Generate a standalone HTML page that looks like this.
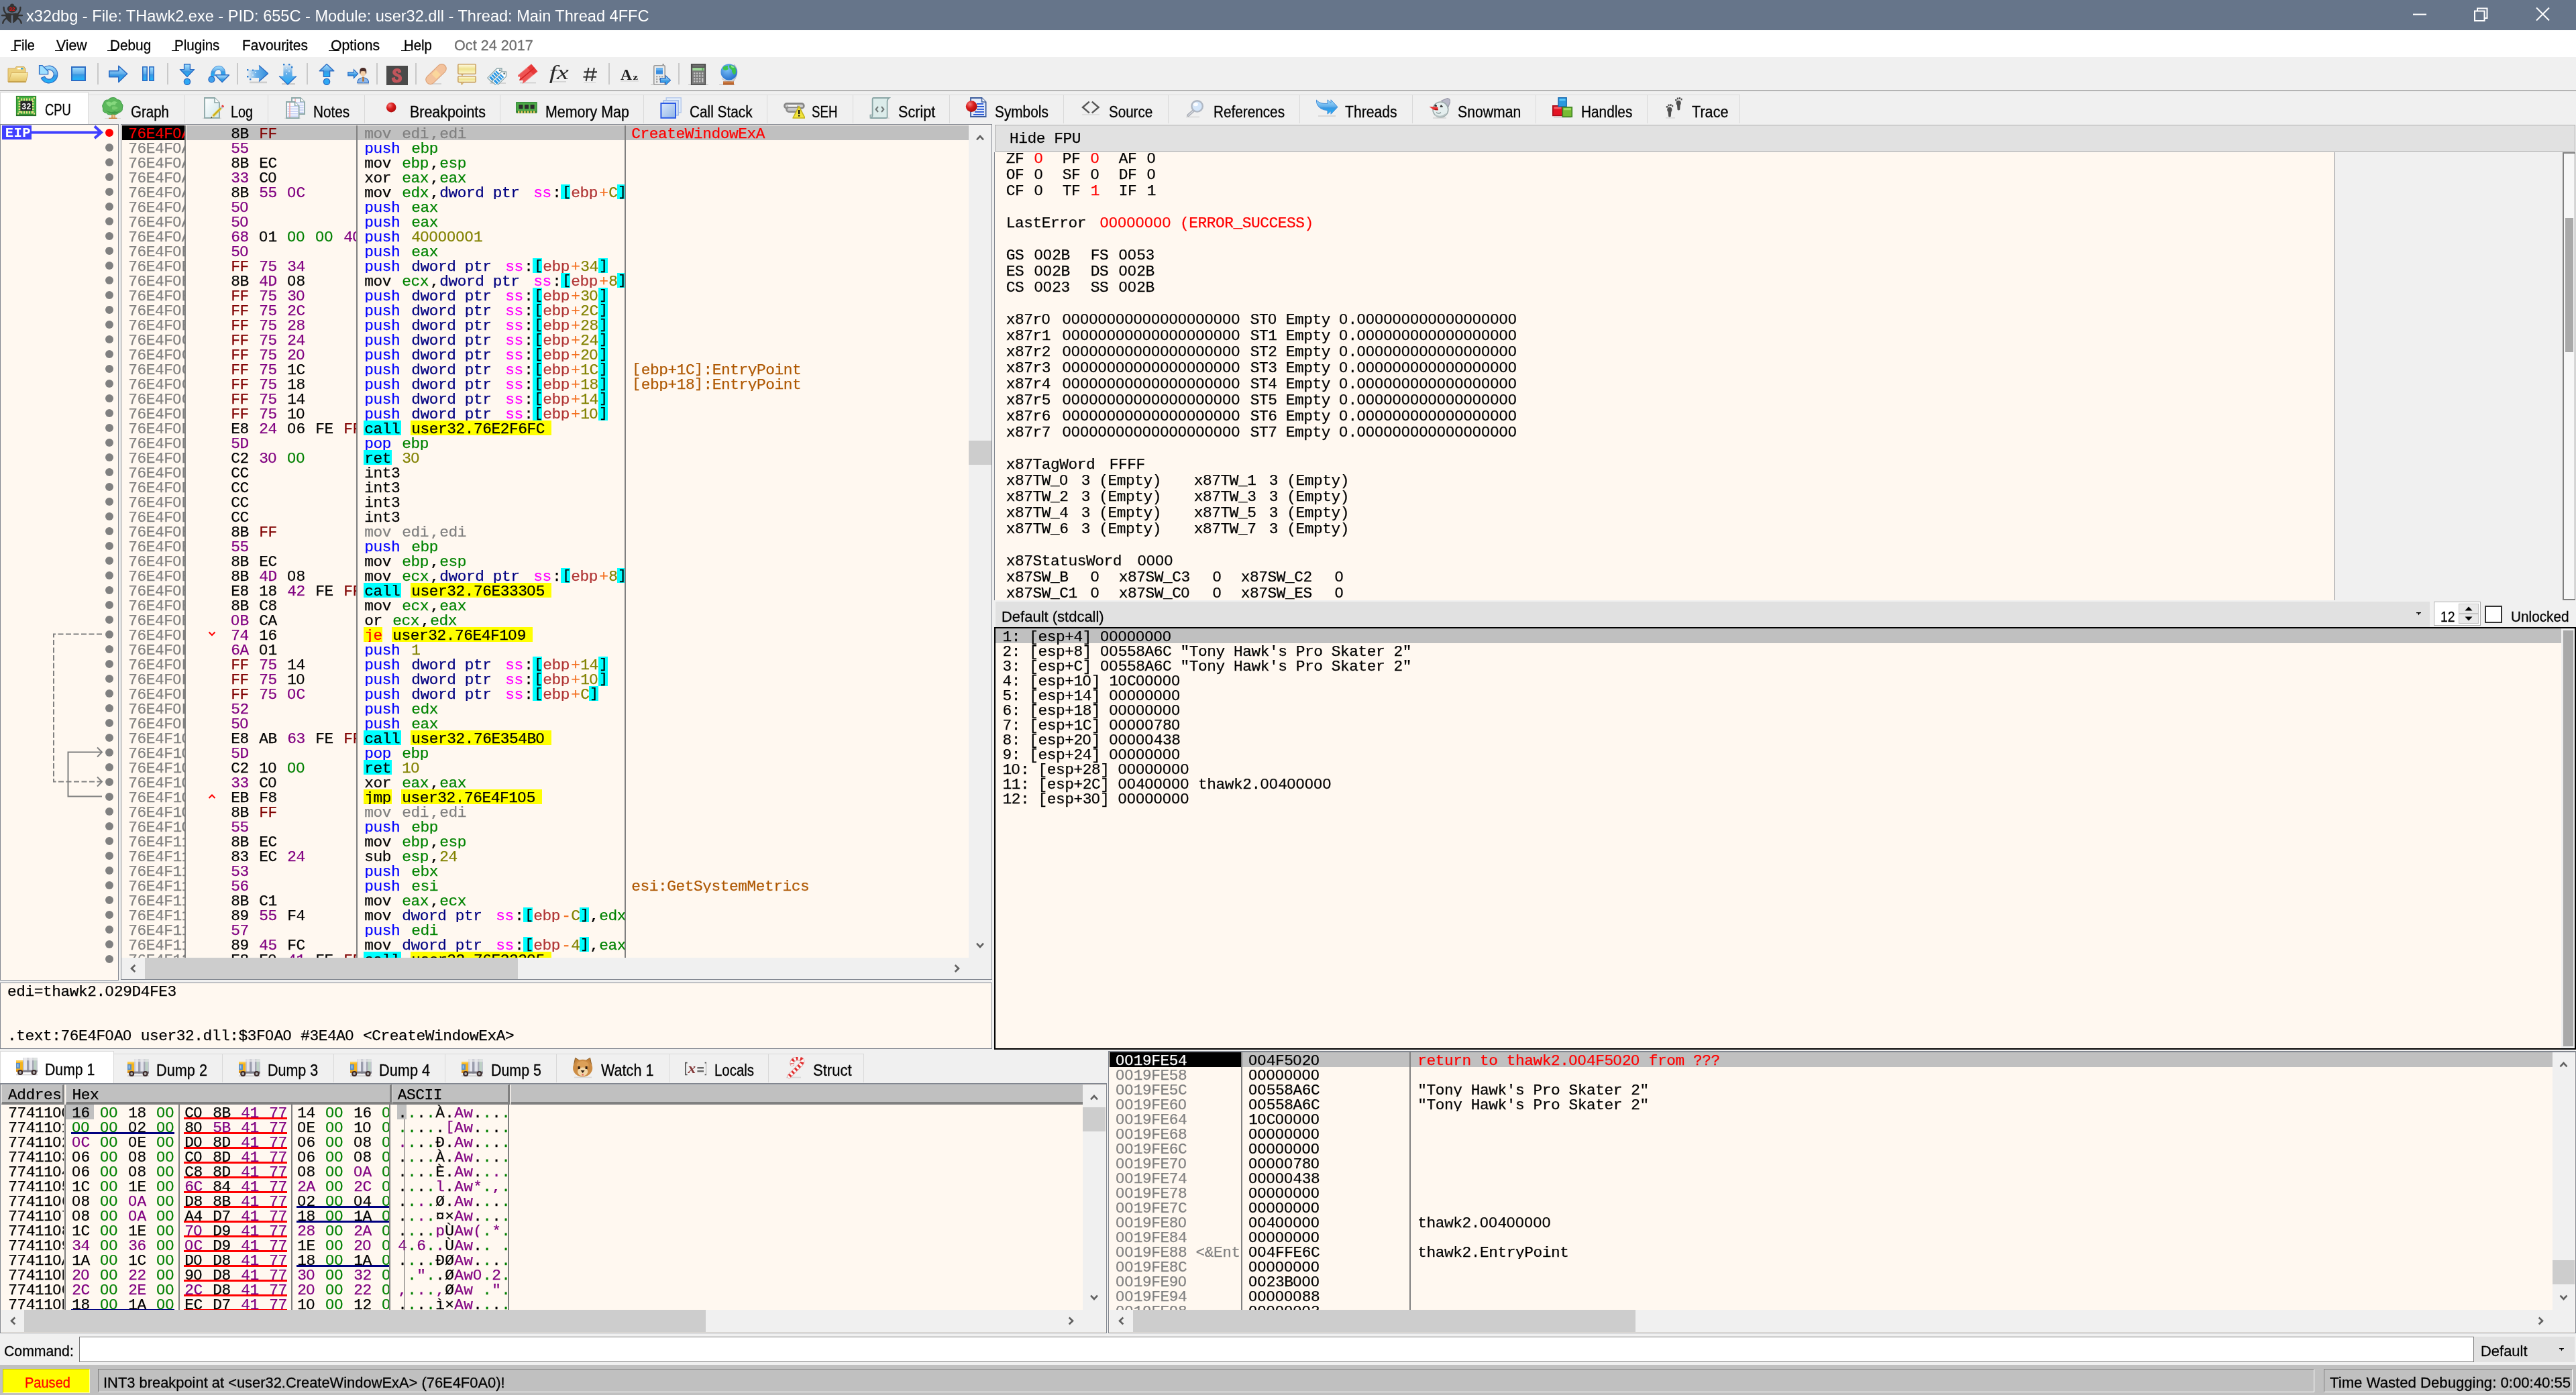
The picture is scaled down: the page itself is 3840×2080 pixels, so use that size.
<!DOCTYPE html><html><head><meta charset="utf-8"><title>x32dbg</title><style>
html,body{margin:0;padding:0}
body{width:3840px;height:2080px;position:relative;overflow:hidden;background:#f0f0f0;font-family:"Liberation Sans",sans-serif;}
div,span,i,svg{position:absolute;box-sizing:border-box}
.s{white-space:pre;transform-origin:0 50%;font-family:"Liberation Sans",sans-serif;-webkit-text-stroke:0.3px}
.m{white-space:pre;font-family:"Liberation Mono",monospace;font-size:22.8px;line-height:26.5px;letter-spacing:-0.430px;-webkit-text-stroke:0.25px}
.pane{background:#fff8f0;overflow:hidden}
/* monospace grid rows */
.r{left:0;height:22px;width:100%;white-space:pre;font-family:"Liberation Mono",monospace;font-size:22.8px;line-height:26.5px;letter-spacing:-0.430px;overflow:hidden;-webkit-text-stroke:0.25px}
.c{top:0;height:22px;overflow:hidden}
.r i{position:static;display:inline-block;font-style:normal;height:22px;vertical-align:top;text-indent:1.3px;overflow:visible}
.z{font-family:"Liberation Sans",sans-serif;font-weight:400;line-height:0;letter-spacing:0.570px}.bi{font-size:20.9px;position:relative;top:-1.95px;letter-spacing:0.71px;font-weight:400}.bo{margin-left:1.3px}.w1{width:14px}.w2{width:28px}.w3{width:42px}.w4{width:56px}.w5{width:70px}.w6{width:84px}.w7{width:98px}.w8{width:112px}.w9{width:126px}.w10{width:140px}.w11{width:154px}.w12{width:168px}.w13{width:182px}.w14{width:196px}.w15{width:210px}.w16{width:224px}.w17{width:238px}.w18{width:252px}.w19{width:266px}.w20{width:280px}
.g{color:#808080}.bl{color:#0000ff}.rg{color:#008300}.nv{color:#000080}.mg{color:#ff00ff}.br{color:#b03434}.or{color:#f36f20}.ol{color:#828200}
.cy{background:#00ffff}.ye{background:#ffff00}.rd{color:#ff0000}.pu{color:#800080}.gr{color:#008000}.dr{color:#800000}
.sel{background:#c0c0c0}
</style></head><body><div id="root" style="left:0;top:0;width:3840px;height:2080px;overflow:hidden;will-change:transform"><svg width="0" height="0" style="left:0;top:0"><defs><linearGradient id="gB" x1="0" y1="0" x2="0" y2="1"><stop offset="0" stop-color="#a6e2ff"/><stop offset=".48" stop-color="#62aeea"/><stop offset=".56" stop-color="#3a98e2"/><stop offset="1" stop-color="#1eb6fd"/></linearGradient><linearGradient id="gBh" x1="0" y1="0" x2="1" y2="0"><stop offset="0" stop-color="#9fdcff"/><stop offset="1" stop-color="#2f8ddc"/></linearGradient><linearGradient id="gF" x1="0" y1="0" x2="0" y2="1"><stop offset="0" stop-color="#f9e9a4"/><stop offset="1" stop-color="#e4c265"/></linearGradient><linearGradient id="gY" x1="0" y1="0" x2="0" y2="1"><stop offset="0" stop-color="#fffbe6"/><stop offset=".5" stop-color="#efe28e"/><stop offset="1" stop-color="#fdf7d0"/></linearGradient><linearGradient id="gFadeR" x1="0" y1="0" x2="1" y2="0"><stop offset="0" stop-color="#5aa8e8" stop-opacity="0"/><stop offset=".45" stop-color="#5aa8e8" stop-opacity=".9"/><stop offset="1" stop-color="#2f8ddc"/></linearGradient><linearGradient id="gFadeD" x1="0" y1="0" x2="0" y2="1"><stop offset="0" stop-color="#5aa8e8" stop-opacity="0"/><stop offset=".45" stop-color="#5aa8e8" stop-opacity=".9"/><stop offset="1" stop-color="#18a8f8"/></linearGradient><radialGradient id="gRed" cx=".35" cy=".3" r=".8"><stop offset="0" stop-color="#f27878"/><stop offset=".45" stop-color="#da1c1c"/><stop offset="1" stop-color="#a40a0a"/></radialGradient><radialGradient id="gGlobe" cx=".4" cy=".35" r=".75"><stop offset="0" stop-color="#7cc0f8"/><stop offset="1" stop-color="#1c68c8"/></radialGradient><linearGradient id="gPage" x1="0" y1="0" x2="1" y2="1"><stop offset="0" stop-color="#ffffff"/><stop offset="1" stop-color="#cfe6ea"/></linearGradient><linearGradient id="gSq" x1="0" y1="0" x2="1" y2="1"><stop offset="0" stop-color="#dbe9fb"/><stop offset="1" stop-color="#8fb4e6"/></linearGradient></defs></svg><div style="left:0px;top:0px;width:3840px;height:45px;background:#66758a;"></div><svg style="left:0;top:0" width="40" height="45" viewBox="0 0 40 45"><g fill="#333" stroke="none"><path d="M8.6 20.3Q18 17.6 27.4 20.3L27.6 25Q26 31 19.3 34.4V22.4H16.7V34.4Q10 31 8.4 25Z"/><ellipse cx="18" cy="13.2" rx="9" ry="7" fill="#66758a"/><ellipse cx="18" cy="13.2" rx="7.2" ry="5.5"/><circle cx="18" cy="8.4" r="3"/></g><g fill="none" stroke="#333" stroke-width="2.4" stroke-linecap="round"><path d="M9.4 20.6Q5.4 17 5.6 10.9M26.6 20.6Q30.6 17 30.4 10.9M3 23H10M26 23H33M10.5 27Q5.2 29 4.2 34.6M25.5 27Q30.8 29 31.8 34.6"/></g><text x="18" y="16.3" font-family="Liberation Sans" font-weight="700" font-size="8" text-anchor="middle" fill="#ff1010">32</text></svg><span class="s" style="left:39.0px;top:7.8px;font-size:24.5px;line-height:32px;color:#fff;transform:scaleX(0.9617);-webkit-text-stroke:0">x32dbg - File: THawk2.exe - PID: 655C - Module: user32.dll - Thread: Main Thread 4FFC</span><svg style="left:3590px;top:0" width="250" height="45" viewBox="0 0 250 45" fill="none" stroke="#fff" stroke-width="2"><path d="M7 21.5H27"/><path d="M99 16.5H113.5V31H99Z"/><path d="M103 16V12.5H117.5V27H114"/><path d="M191 11.5L210 30.5M210 11.5L191 30.5"/></svg><div style="left:0px;top:45px;width:3840px;height:40px;background:#fff;"></div><span class="s" style="left:19.6px;top:53.1px;font-size:22.5px;line-height:29px;color:#000;transform:scaleX(0.8769);">File</span><div style="left:16.3px;top:74.7px;width:9.8px;height:1px;background:#000;"></div><span class="s" style="left:84.0px;top:53.1px;font-size:22.5px;line-height:29px;color:#000;transform:scaleX(0.9426);">View</span><div style="left:82px;top:74.7px;width:11.799999999999997px;height:1px;background:#000;"></div><span class="s" style="left:163.5px;top:53.1px;font-size:22.5px;line-height:29px;color:#000;transform:scaleX(0.9229);">Debug</span><div style="left:160px;top:74.7px;width:13.599999999999994px;height:1px;background:#000;"></div><span class="s" style="left:259.6px;top:53.1px;font-size:22.5px;line-height:29px;color:#000;transform:scaleX(0.9133);">Plugins</span><div style="left:256px;top:74.7px;width:11.399999999999977px;height:1px;background:#000;"></div><span class="s" style="left:361.4px;top:53.1px;font-size:22.5px;line-height:29px;color:#000;transform:scaleX(0.9320);">Favourites</span><div style="left:424.8px;top:74.7px;width:4.199999999999989px;height:1px;background:#000;"></div><span class="s" style="left:493.2px;top:53.1px;font-size:22.5px;line-height:29px;color:#000;transform:scaleX(0.9439);">Options</span><div style="left:490px;top:74.7px;width:15.800000000000011px;height:1px;background:#000;"></div><span class="s" style="left:601.8px;top:53.1px;font-size:22.5px;line-height:29px;color:#000;transform:scaleX(0.9053);">Help</span><div style="left:598px;top:74.7px;width:14.399999999999977px;height:1px;background:#000;"></div><span class="s" style="left:676.9px;top:53.1px;font-size:22.5px;line-height:29px;color:#6e6e6e;transform:scaleX(0.9609);">Oct 24 2017</span><div style="left:0px;top:85px;width:3840px;height:49px;background:#f0f0f0;"></div><div style="left:0px;top:134px;width:3840px;height:2px;background:#b4b4b4;"></div><div style="left:145px;top:94px;width:2px;height:32px;background:#c9c9c9;"></div><div style="left:249px;top:94px;width:2px;height:32px;background:#c9c9c9;"></div><div style="left:353px;top:94px;width:2px;height:32px;background:#c9c9c9;"></div><div style="left:457px;top:94px;width:2px;height:32px;background:#c9c9c9;"></div><div style="left:561px;top:94px;width:2px;height:32px;background:#c9c9c9;"></div><div style="left:619px;top:94px;width:2px;height:32px;background:#c9c9c9;"></div><div style="left:907px;top:94px;width:2px;height:32px;background:#c9c9c9;"></div><div style="left:1011px;top:94px;width:2px;height:32px;background:#c9c9c9;"></div><svg style="left:10px;top:95px" width="32" height="32" viewBox="0 0 32 32"><path d="M2 7H13L14 4.5H26L27 7H28V27H2Z" fill="#ecd07c" stroke="#d2ab5c"/><rect x="16" y="6" width="5" height="2.4" fill="#fff"/><rect x="21" y="6" width="3.4" height="2.4" fill="#38a8e0"/><path d="M7 13.5H32L28.5 27.5H2.5Z" fill="url(#gF)" stroke="#d4ae5e"/><path d="M2.5 27H28.5" stroke="#c09a44" stroke-width="1.6"/></svg><svg style="left:56px;top:95px" width="32" height="32" viewBox="0 0 32 32"><path d="M6.5 8.66A12.8 12.8 0 1 1 5.4 21.4L10.47 19.04A7.2 7.2 0 1 0 11.1 11.87Z" fill="url(#gB)" stroke="#2b6cc4" stroke-width="1.2"/><path d="M2.6 2.6H7L15.6 11.2V15.6H2.6Z" fill="#9fe0ff" stroke="#2b6cc4" stroke-width="1.4"/></svg><svg style="left:102px;top:95px" width="32" height="32" viewBox="0 0 32 32"><rect x="5" y="5" width="20" height="20" fill="url(#gB)" stroke="#2b6cc4" stroke-width="2"/></svg><svg style="left:160px;top:95px" width="32" height="32" viewBox="0 0 32 32"><path d="M2.8 10.8H16.8V3.4L29.6 15L16.8 27.4V19.6H2.8Z" fill="url(#gB)" stroke="#2b6cc4" stroke-width="1.6" stroke-linejoin="round"/></svg><svg style="left:206px;top:95px" width="32" height="32" viewBox="0 0 32 32"><rect x="6.8" y="4.8" width="6.4" height="20.4" fill="url(#gB)" stroke="#2b6cc4" stroke-width="1.6"/><rect x="16.8" y="4.8" width="6.4" height="20.4" fill="url(#gB)" stroke="#2b6cc4" stroke-width="1.6"/></svg><svg style="left:264px;top:95px" width="32" height="32" viewBox="0 0 32 32"><path d="M10.6 0.8H19.4V8.6H25.6L15 19.6L4.4 8.6H10.6Z" fill="url(#gB)" stroke="#2b6cc4" stroke-width="1.4" stroke-linejoin="round"/><circle cx="15" cy="26.8" r="4.6" fill="#2fa8f4" stroke="#2b6cc4" stroke-width="1.4"/></svg><svg style="left:310px;top:95px" width="32" height="32" viewBox="0 0 32 32"><path d="M4.6 18.5C4 9 10 3.2 16.5 3.4C23 3.6 26 9 25.8 16.5H19.8C20 11.5 18.6 8.6 15.8 8.6C12 8.6 9.4 12 9.6 18.5Z" fill="url(#gB)" stroke="#3f8bd8" stroke-width="1"/><path d="M10.8 16.8H31.6L21.2 27.6Z" fill="url(#gB)" stroke="#2b6cc4" stroke-width="1.4" stroke-linejoin="round"/><circle cx="5.4" cy="23.4" r="4.4" fill="#3fa0ec" stroke="#2b6cc4" stroke-width="1.4"/></svg><svg style="left:368px;top:95px" width="32" height="32" viewBox="0 0 32 32"><rect x="4" y="26.6" width="26" height="2.6" fill="#bdbdbd" opacity=".7"/><path d="M0 9H18V2.4L31.6 14.6L18 26.6V21H0Z" fill="url(#gFadeR)"/><path d="M18 2.4L31.6 14.6L18 26.6" fill="none" stroke="#2b6cc4" stroke-width="1.4"/><g fill="#2b7bd0"><rect x="0" y="8" width="2.4" height="2.4"/><rect x="0" y="18" width="2.4" height="2.4"/><rect x="4" y="22" width="2.4" height="2.4"/><rect x="4" y="12" width="2" height="2" fill="#bfe4ff"/><rect x="8" y="16" width="2" height="2" fill="#bfe4ff"/><rect x="12" y="12" width="2" height="2" fill="#bfe4ff"/><rect x="8" y="8.6" width="2" height="2"/></g></svg><svg style="left:414px;top:95px" width="32" height="32" viewBox="0 0 32 32"><rect x="6" y="29" width="20" height="2.4" fill="#bdbdbd" opacity=".7"/><path d="M8.4 0H21.6V18.4H27.8L15 31L2.2 18.4H8.4Z" fill="url(#gFadeD)"/><path d="M2.2 18.4L15 31L27.8 18.4" fill="none" stroke="#2b6cc4" stroke-width="1.4"/><g fill="#2b7bd0"><rect x="8" y="0" width="2.4" height="2.4"/><rect x="16" y="0" width="2.4" height="2.4"/><rect x="20" y="4" width="2.4" height="2.4"/><rect x="12" y="6" width="2" height="2" fill="#bfe4ff"/><rect x="16" y="10" width="2" height="2" fill="#bfe4ff"/><rect x="12" y="14" width="2" height="2" fill="#bfe4ff"/></g></svg><svg style="left:472px;top:95px" width="32" height="32" viewBox="0 0 32 32"><path d="M15 0.6L25.8 10.8H19.6V19.4H10.4V10.8H4.2Z" fill="url(#gB)" stroke="#2b6cc4" stroke-width="1.4" stroke-linejoin="round"/><circle cx="15" cy="26.8" r="4.6" fill="#2fa8f4" stroke="#2b6cc4" stroke-width="1.4"/></svg><svg style="left:518px;top:95px" width="32" height="32" viewBox="0 0 32 32"><path d="M0.8 12.6H9.4V8.8L15.6 15L9.4 21.4V17.8H0.8Z" fill="url(#gB)" stroke="#2b6cc4" stroke-width="1.2"/><rect x="15" y="29" width="17" height="2" fill="#bdbdbd" opacity=".7"/><path d="M14.6 28.6Q15 21.5 23.2 20.6Q31.4 21.5 31.8 28.6Z" fill="#8db8ec" stroke="#3f78c4" stroke-width="1.2"/><path d="M21.2 20.6L23.2 28.6L25.2 20.6Z" fill="#fff"/><rect x="22.2" y="19.6" width="2.2" height="7" fill="#a8601c"/><circle cx="23.2" cy="13.6" r="4.8" fill="#f4cfa8"/><path d="M18.2 14.5V10.8Q18.4 6 23.2 6Q28 6 28.2 10.8V14.5H26.8V11.4Q23 10.4 19.6 11.4V14.5Z" fill="#4a2c28"/></svg><svg style="left:576px;top:95px" width="32" height="32" viewBox="0 0 32 32"><rect x="0" y="3" width="32" height="29" fill="#4a4a4a"/><path d="M21.6 11.2C21.4 7.6 18.6 6.2 15.6 6.4C11.6 6.6 9.6 9.2 9.8 12C10 15 12.6 16.2 15.8 17.4C18 18.2 18.8 19.6 18.4 21.4C18 23 16 23.6 14.2 23C12.6 22.4 12.2 21 12.4 19.6L8.4 20.4C8.2 24.4 11 26.8 15.2 26.8C19.6 26.8 22.6 24.4 22.6 20.6C22.6 17.2 20.2 15.6 17 14.4C14.6 13.4 13.4 12.6 13.8 10.8C14.2 9.4 15.8 9.2 17 9.8C18 10.4 18.2 11.4 18 12.4Z" fill="#c2565c" stroke="#c2565c" stroke-width="1.2" transform="translate(0 1.2)"/></svg><svg style="left:634px;top:95px" width="32" height="32" viewBox="0 0 32 32"><rect x="6" y="29" width="18" height="2" fill="#c8c8c8" opacity=".7"/><rect x="-4.5" y="-6.8" width="37" height="13.6" rx="6.8" transform="translate(16 15.6) rotate(-44) translate(-14 0)" fill="#f3c29c" stroke="#dca47c" stroke-width="1.2"/><rect x="-4.5" y="-5" width="9" height="10" transform="translate(16.2 15.8) rotate(-45)" fill="#fbd79c"/></svg><svg style="left:680px;top:95px" width="32" height="32" viewBox="0 0 32 32"><rect x="2.8" y="0.8" width="26.4" height="14.4" rx="1.5" fill="url(#gY)" stroke="#c9a264" stroke-width="1.6"/><path d="M7 15.4H11L9 18.4Z" fill="#c9a264"/><rect x="2.8" y="18.8" width="26.4" height="8.8" rx="1.5" fill="url(#gY)" stroke="#c9a264" stroke-width="1.6"/><path d="M7 27.8H11L8.4 31.6Z" fill="#e8cf8a" stroke="#c9a264" stroke-width="1"/></svg><svg style="left:726px;top:95px" width="32" height="32" viewBox="0 0 32 32"><rect x="4" y="28" width="24" height="2" fill="#c8c8c8" opacity=".7"/><g transform="translate(13.5 15.5) rotate(-45)"><path d="M-13 -5H7L12 0L7 5H-13Z" fill="#fff" stroke="#8aa4a8" stroke-width="1.3"/><rect x="-11" y="-3.4" width="15" height="6.8" fill="#2b98e4"/><path d="M-7 -3.4V3.4M-3 -3.4V3.4M1 -3.4V3.4" stroke="#fff" stroke-width="1.2"/><circle cx="8" cy="0" r="1.4" fill="#5a7478"/></g><g transform="translate(20 20.5) rotate(-45)"><path d="M-13 -5H7L12 0L7 5H-13Z" fill="#fff" stroke="#8aa4a8" stroke-width="1.3"/><rect x="-11" y="-3.4" width="15" height="6.8" fill="#2b98e4"/><path d="M-7 -3.4V3.4M-3 -3.4V3.4M1 -3.4V3.4" stroke="#fff" stroke-width="1.2"/><circle cx="8" cy="0" r="1.4" fill="#5a7478"/></g></svg><svg style="left:772px;top:95px" width="32" height="32" viewBox="0 0 32 32"><rect x="3" y="27.4" width="24" height="2" fill="#c8c8c8" opacity=".7"/><g transform="translate(14 15) rotate(-40)"><path d="M-15 -7H14V7H-15L-11 3.5L-15 0L-11 -3.5Z" fill="#ee5454"/><path d="M-15 0H14" stroke="#d42020" stroke-width="1.6"/><path d="M-15 -7H14M-13 7H14" stroke="#f08080" stroke-width="1"/><rect x="6" y="-7" width="8" height="14" fill="#e22828" opacity=".6"/></g></svg><svg style="left:818px;top:95px" width="32" height="32" viewBox="0 0 32 32"><rect x="2" y="26" width="24" height="1.6" fill="#c8c8c8" opacity=".7"/><text x="0.8" y="22.6" font-family="Liberation Serif" font-style="italic" font-size="29" fill="#2a2a2a" textLength="29" lengthAdjust="spacingAndGlyphs">fx</text></svg><svg style="left:864px;top:95px" width="32" height="32" viewBox="0 0 32 32"><rect x="6" y="27" width="18" height="1.4" fill="#c8c8c8" opacity=".6"/><path d="M13.4 6L9.6 26M21.8 6L18 26M6.6 12.4H26M5.4 19.8H24.8" fill="none" stroke="#333" stroke-width="2.1"/></svg><svg style="left:922px;top:95px" width="32" height="32" viewBox="0 0 32 32"><rect x="3" y="25" width="27" height="1.6" fill="#c8c8c8" opacity=".6"/><text x="3" y="24" font-family="Liberation Serif" font-weight="700" font-size="23" fill="#222" textLength="17" lengthAdjust="spacingAndGlyphs">A</text><text x="21.6" y="24" font-family="Liberation Serif" font-weight="700" font-size="13" fill="#222" textLength="7.6" lengthAdjust="spacingAndGlyphs">z</text></svg><svg style="left:968px;top:95px" width="32" height="32" viewBox="0 0 32 32"><rect x="2" y="30" width="22" height="2" fill="#c8c8c8" opacity=".7"/><rect x="19.6" y="0" width="2" height="4" fill="#888"/><rect x="6.8" y="2.8" width="16.4" height="28.4" rx="1.5" fill="#ececec" stroke="#9a9a9a" stroke-width="1.6"/><rect x="10" y="6" width="10" height="9.6" fill="#3a8ee0"/><rect x="10" y="6" width="10" height="4" fill="#6cb4f0"/><g fill="#a8a8a8"><rect x="10" y="18" width="2.4" height="2.4"/><rect x="14" y="18" width="2.4" height="2.4"/><rect x="18" y="18" width="2.4" height="2.4"/><rect x="10" y="22" width="2.4" height="2.4"/><rect x="14" y="22" width="2.4" height="2.4"/><rect x="10" y="26" width="2.4" height="2.4"/></g><path d="M16.4 21.6H24.4V17.8L31.6 24.6L24.4 31.6V27.8H16.4Z" fill="url(#gB)" stroke="#2b6cc4" stroke-width="1.2"/></svg><svg style="left:1026px;top:95px" width="32" height="32" viewBox="0 0 32 32"><rect x="0" y="30" width="30" height="2" fill="#c8c8c8" opacity=".7"/><rect x="4.6" y="0.6" width="20.8" height="30.8" fill="#7a7a7a" stroke="#4a4a4a" stroke-width="1.4"/><rect x="5.2" y="1.2" width="19.6" height="4.8" fill="#555"/><rect x="6.6" y="2.6" width="16.8" height="1.4" fill="#8a8a8a"/><rect x="6.4" y="6.2" width="17.2" height="4" fill="#9fd89a"/><rect x="20.4" y="6.2" width="2" height="4" fill="#5aa85a"/><g fill="#c6c6c6"><rect x="8" y="13.2" width="2.4" height="2.4"/><rect x="8" y="17.2" width="2.4" height="2.4"/><rect x="8" y="21.2" width="2.4" height="2.4"/><rect x="8" y="25.2" width="2.4" height="2.4"/><rect x="12" y="13.2" width="2.4" height="2.4"/><rect x="12" y="17.2" width="2.4" height="2.4"/><rect x="12" y="21.2" width="2.4" height="2.4"/><rect x="12" y="25.2" width="2.4" height="2.4"/><rect x="16" y="13.2" width="2.4" height="2.4"/><rect x="16" y="17.2" width="2.4" height="2.4"/><rect x="16" y="21.2" width="2.4" height="2.4"/><rect x="16" y="25.2" width="2.4" height="2.4"/><rect x="20" y="13.2" width="2.4" height="2.4"/><rect x="20" y="17.2" width="2.4" height="2.4"/><rect x="20" y="21.2" width="2.4" height="6.4"/></g></svg><svg style="left:1072px;top:95px" width="32" height="32" viewBox="0 0 32 32"><rect x="0" y="30" width="24" height="2" fill="#c8c8c8" opacity=".6"/><path d="M22 1.5Q31 12 21 26" fill="none" stroke="#b8bcc4" stroke-width="2.2"/><path d="M4 22Q14 30 24 22" fill="none" stroke="#c8ccd2" stroke-width="2"/><circle cx="14.6" cy="12.4" r="12.2" fill="url(#gGlobe)"/><path d="M6 5Q9 2.6 13 3Q12 6 14 8Q11 10.4 8 9.4Q5 9.4 6 5ZM15 2.4Q21 1.6 24.4 6.4Q25.8 10 24.6 14.4Q22.4 18 20.6 14.4Q18.4 12.4 19 9Q14.4 7 15 2.4Z" fill="#3cc44a"/><path d="M18 2.6Q21 3 23 5.4Q20 7 18 5Z" fill="#8ce48c"/><rect x="6" y="26.4" width="16" height="5.2" fill="#b4602c"/><rect x="6" y="27.8" width="16" height="1.4" fill="#d88848"/></svg><div style="left:0px;top:136px;width:3840px;height:49px;background:#f0f0f0;"></div><div style="left:132px;top:141px;width:2461px;height:1px;background:#d9d9d9;"></div><div style="left:0px;top:137px;width:132px;height:49px;background:#fff;border:1px solid #d9d9d9;border-bottom:none"></div><svg style="left:23px;top:142px" width="32" height="32" viewBox="0 0 32 32"><rect x="1.6" y="1.6" width="28.8" height="28.8" fill="#46b040" stroke="#2c8a30" stroke-width="1.4"/><rect x="1" y="28.6" width="30" height="2.4" fill="#256e28"/><g fill="#f2dc8a"><rect x="8.2" y="4.6" width="2" height="3.6"/><rect x="8.2" y="23.8" width="2" height="3.6"/><rect x="4.6" y="8.2" width="3.6" height="2"/><rect x="23.8" y="8.2" width="3.6" height="2"/><rect x="12.1" y="4.6" width="2" height="3.6"/><rect x="12.1" y="23.8" width="2" height="3.6"/><rect x="4.6" y="12.1" width="3.6" height="2"/><rect x="23.8" y="12.1" width="3.6" height="2"/><rect x="16.0" y="4.6" width="2" height="3.6"/><rect x="16.0" y="23.8" width="2" height="3.6"/><rect x="4.6" y="16.0" width="3.6" height="2"/><rect x="23.8" y="16.0" width="3.6" height="2"/><rect x="19.9" y="4.6" width="2" height="3.6"/><rect x="19.9" y="23.8" width="2" height="3.6"/><rect x="4.6" y="19.9" width="3.6" height="2"/><rect x="23.8" y="19.9" width="3.6" height="2"/><rect x="23.799999999999997" y="4.6" width="2" height="3.6"/><rect x="23.799999999999997" y="23.8" width="2" height="3.6"/><rect x="4.6" y="23.799999999999997" width="3.6" height="2"/><rect x="23.8" y="23.799999999999997" width="3.6" height="2"/><rect x="3" y="3" width="2.2" height="2.2"/><rect x="26.8" y="3" width="2.2" height="2.2"/><rect x="3" y="26.4" width="2.2" height="2.2"/><rect x="26.8" y="26.4" width="2.2" height="2.2"/></g><rect x="7.4" y="8.6" width="17.6" height="14.4" fill="#262626"/><text x="16.2" y="20.6" font-family="Liberation Mono" font-weight="700" font-size="13.5" text-anchor="middle" fill="#fff" textLength="14.5" lengthAdjust="spacingAndGlyphs">32</text></svg><span class="s" style="left:66.5px;top:149.2px;font-size:23px;line-height:30px;color:#000;transform:scaleX(0.7990);">CPU</span><div style="left:275px;top:141px;width:1px;height:43px;background:#d9d9d9;"></div><svg style="left:152px;top:145px" width="32" height="32" viewBox="0 0 32 32"><rect x="4" y="31" width="24" height="2" fill="#c8c8c8" opacity=".6"/><rect x="14" y="24" width="6" height="8" fill="#d8a468"/><rect x="16.4" y="24" width="2" height="8" fill="#f0c890"/><rect x="10" y="30.6" width="12.4" height="2" fill="#c07830"/><path d="M16 0.6Q21 0.2 22.6 3.8Q28 3.4 29 8.6Q32.4 12 30.4 16.2Q31 21 26 22.6Q21 27 16 25Q10 27.6 6.4 23.4Q0.4 22.6 1.6 17Q-0.8 12 2.6 8.6Q3.4 3.6 9.4 4Q11.4 0.4 16 0.6Z" fill="#5cb85c" stroke="#3c9a44" stroke-width="1"/><path d="M6 8Q10 5 14 8Q18 4 23 7.6Q20 9 19.6 12Q14 10 12 14Q8 13 6 8Z" fill="#86d87e"/><path d="M15 14Q20 12 24 16Q20 20 15 18Z" fill="#78cc70"/><path d="M5 19Q12 24 19 21Q24 23 27 19Q26 23 20 24.4Q12 26 5 19Z" fill="#3e9a46"/></svg><span class="s" style="left:195.3px;top:151.6px;font-size:23px;line-height:30px;color:#000;transform:scaleX(0.8915);">Graph</span><div style="left:399px;top:141px;width:1px;height:43px;background:#d9d9d9;"></div><svg style="left:302px;top:145px" width="32" height="32" viewBox="0 0 32 32"><rect x="0" y="30.6" width="28" height="1.6" fill="#c8c8c8" opacity=".6"/><path d="M3 1H18L25 8V30.8H3Z" fill="url(#gPage)" stroke="#8aa6a6" stroke-width="1.8"/><path d="M18 1V8H25" fill="#fff" stroke="#8aa6a6" stroke-width="1.6"/><path d="M12.2 31L14.4 26.6L26 15L28.6 17.6L17 29.2Z" fill="#e4cc38"/><path d="M15.6 27.8L27.2 16.2" stroke="#b89a18" stroke-width="1.2"/><path d="M12.2 31L14.4 26.6L16.6 28.8Z" fill="#f4e4c0"/><path d="M12 31.4L13.2 29L14.4 30.2Z" fill="#111"/><path d="M26 15L28 13L30.6 15.6L28.6 17.6Z" fill="#c0c4c8"/><path d="M28 13L29.6 11.4Q31.4 11.6 32 13.8L30.6 15.6Z" fill="#ea3434"/></svg><span class="s" style="left:343.5px;top:151.6px;font-size:23px;line-height:30px;color:#000;transform:scaleX(0.8599);">Log</span><div style="left:543px;top:141px;width:1px;height:43px;background:#d9d9d9;"></div><svg style="left:424px;top:145px" width="32" height="32" viewBox="0 0 32 32"><path d="M11 1H24L30 7V25H11Z" fill="#f6f8fe" stroke="#8aa6a6" stroke-width="1.8"/><path d="M24 1V7H30" fill="#fff" stroke="#8aa6a6" stroke-width="1.6"/><rect x="12.6" y="7.4" width="16.0" height="1.7" fill="#c4d0f4"/><rect x="12.6" y="11.0" width="16.0" height="1.7" fill="#c4d0f4"/><rect x="12.6" y="14.6" width="16.0" height="1.7" fill="#c4d0f4"/><rect x="12.6" y="18.2" width="16.0" height="1.7" fill="#c4d0f4"/><rect x="12.6" y="21.8" width="16.0" height="1.7" fill="#c4d0f4"/><rect x="15.4" y="2" width="1.4" height="22" fill="#f2aaaa"/><rect x="0" y="30.6" width="24" height="1.6" fill="#c8c8c8" opacity=".6"/><path d="M3 7H15.600000000000001L21.6 13V31H3Z" fill="#fafbff" stroke="#8aa6a6" stroke-width="1.8"/><path d="M15.600000000000001 7V13H21.6" fill="#fff" stroke="#8aa6a6" stroke-width="1.6"/><rect x="4.6" y="13.0" width="15.6" height="1.7" fill="#c4d0f4"/><rect x="4.6" y="16.6" width="15.6" height="1.7" fill="#c4d0f4"/><rect x="4.6" y="20.2" width="15.6" height="1.7" fill="#c4d0f4"/><rect x="4.6" y="23.8" width="15.6" height="1.7" fill="#c4d0f4"/><rect x="4.6" y="27.4" width="15.6" height="1.7" fill="#c4d0f4"/><rect x="7.2" y="8" width="1.6" height="22" fill="#f2aaaa"/></svg><span class="s" style="left:466.9px;top:151.6px;font-size:23px;line-height:30px;color:#000;transform:scaleX(0.9003);">Notes</span><div style="left:745px;top:141px;width:1px;height:43px;background:#d9d9d9;"></div><svg style="left:567px;top:145px" width="32" height="32" viewBox="0 0 32 32"><circle cx="16.2" cy="15.1" r="7.3" fill="url(#gRed)"/></svg><span class="s" style="left:610.8px;top:151.6px;font-size:23px;line-height:30px;color:#000;transform:scaleX(0.9303);">Breakpoints</span><div style="left:959px;top:141px;width:1px;height:43px;background:#d9d9d9;"></div><svg style="left:769px;top:145px" width="32" height="32" viewBox="0 0 32 32"><rect x="0.8" y="7.8" width="30.2" height="14.4" fill="#4eac48" stroke="#2f8a34" stroke-width="1.4"/><rect x="0.8" y="20" width="30.2" height="3.8" fill="#2f7a30"/><g fill="#2c2c2c"><rect x="4.4" y="11" width="6" height="6.4"/><rect x="13" y="11" width="6" height="6.4"/><rect x="21.6" y="11" width="6" height="6.4"/></g><g fill="#f0d060"><rect x="3.0" y="20.4" width="2.4" height="3.4"/><rect x="7.6" y="20.4" width="2.4" height="3.4"/><rect x="12.2" y="20.4" width="2.4" height="3.4"/><rect x="16.799999999999997" y="20.4" width="2.4" height="3.4"/><rect x="21.4" y="20.4" width="2.4" height="3.4"/><rect x="26.0" y="20.4" width="2.4" height="3.4"/></g></svg><span class="s" style="left:812.7px;top:151.6px;font-size:23px;line-height:30px;color:#000;transform:scaleX(0.9307);">Memory Map</span><div style="left:1143px;top:141px;width:1px;height:43px;background:#d9d9d9;"></div><svg style="left:984px;top:145px" width="32" height="32" viewBox="0 0 32 32"><rect x="9.2" y="0.8" width="22" height="22" fill="#e4eefb" stroke="#b4c8ea" stroke-width="1.4"/><rect x="5.2" y="4.8" width="22" height="22" fill="#d4e2f7" stroke="#9cb8e6" stroke-width="1.4"/><rect x="1.4" y="9" width="21.6" height="21.8" fill="url(#gSq)" stroke="#2a5ae6" stroke-width="2"/></svg><span class="s" style="left:1027.6px;top:151.6px;font-size:23px;line-height:30px;color:#000;transform:scaleX(0.9039);">Call Stack</span><div style="left:1271px;top:141px;width:1px;height:43px;background:#d9d9d9;"></div><svg style="left:1168px;top:145px" width="32" height="32" viewBox="0 0 32 32"><rect x="1.4" y="9.4" width="29" height="7" rx="3.5" fill="#d0d0d0" stroke="#868686" stroke-width="2.6"/><rect x="4.4" y="14.6" width="20" height="7" rx="3.5" fill="#c8c8c8" stroke="#8c8c8c" stroke-width="2.6"/><rect x="7" y="12" width="13" height="2" fill="#fff"/><path d="M23 13.6L32 31H14Z" fill="#f2e43c" stroke="#c4b41c" stroke-width="1.6" stroke-linejoin="round"/><rect x="22" y="19" width="2.2" height="6" fill="#111"/><rect x="22" y="26.4" width="2.2" height="2.2" fill="#111"/></svg><span class="s" style="left:1210.4px;top:151.6px;font-size:23px;line-height:30px;color:#000;transform:scaleX(0.8119);">SEH</span><div style="left:1415px;top:141px;width:1px;height:43px;background:#d9d9d9;"></div><svg style="left:1296px;top:145px" width="32" height="32" viewBox="0 0 32 32"><rect x="0" y="30.4" width="30" height="1.6" fill="#c8c8c8" opacity=".6"/><path d="M6 1H29.4Q26.4 3 26.6 7V29.6Q26.6 31 24 31H1.4Q4.6 30 4.6 26.6V4Q4.6 1 6 1Z" fill="#dcecea" stroke="#8aa6a6" stroke-width="1.8"/><path d="M4.6 26.4H1.2V30.6" fill="none" stroke="#8aa6a6" stroke-width="1.4"/><path d="M13 14L9.6 18L13 22M18 14L21.4 18L18 22" fill="none" stroke="#707878" stroke-width="2"/></svg><span class="s" style="left:1338.5px;top:151.6px;font-size:23px;line-height:30px;color:#000;transform:scaleX(0.9388);">Script</span><div style="left:1585px;top:141px;width:1px;height:43px;background:#d9d9d9;"></div><svg style="left:1439px;top:145px" width="32" height="32" viewBox="0 0 32 32"><path d="M8 1H24.6L30.6 7V29H8Z" fill="#e4ecfa" stroke="#3c5c9c" stroke-width="1.8"/><path d="M24.6 1V7H30.6" fill="#fff" stroke="#3c5c9c" stroke-width="1.6"/><g fill="#2454d4"><rect x="17" y="9" width="10" height="1.8"/><rect x="17" y="13" width="11" height="1.8"/><rect x="17" y="17" width="11" height="1.8"/><rect x="14" y="21" width="14" height="1.8"/><rect x="12" y="25" width="16" height="1.8"/></g><circle cx="9.2" cy="13.6" r="8.4" fill="url(#gRed)"/></svg><span class="s" style="left:1483.2px;top:151.6px;font-size:23px;line-height:30px;color:#000;transform:scaleX(0.9047);">Symbols</span><div style="left:1741px;top:141px;width:1px;height:43px;background:#d9d9d9;"></div><svg style="left:1610px;top:145px" width="32" height="32" viewBox="0 0 32 32"><rect x="3" y="25" width="26" height="1.6" fill="#c8c8c8" opacity=".5"/><path d="M13.8 6.6L4 15L13.8 23.4M17.8 6.6L27.6 15L17.8 23.4" fill="none" stroke="#555" stroke-width="2.4"/></svg><span class="s" style="left:1653.4px;top:151.6px;font-size:23px;line-height:30px;color:#000;transform:scaleX(0.8947);">Source</span><div style="left:1937px;top:141px;width:1px;height:43px;background:#d9d9d9;"></div><svg style="left:1766px;top:145px" width="32" height="32" viewBox="0 0 32 32"><rect x="2" y="28.6" width="20" height="1.6" fill="#c8c8c8" opacity=".6"/><path d="M12.6 20.6L5.2 27" stroke="#a4a8b0" stroke-width="4" stroke-linecap="round"/><path d="M12.6 20.6L5.2 27" stroke="#d8dce4" stroke-width="1.4" stroke-linecap="round"/><circle cx="18.6" cy="13.4" r="8.2" fill="#d4e6fa" stroke="#b0b8c4" stroke-width="2.4"/><ellipse cx="16.4" cy="10.6" rx="3.6" ry="2.6" fill="#fff" opacity=".9"/></svg><span class="s" style="left:1809.2px;top:151.6px;font-size:23px;line-height:30px;color:#000;transform:scaleX(0.9012);">References</span><div style="left:2105px;top:141px;width:1px;height:43px;background:#d9d9d9;"></div><svg style="left:1962px;top:145px" width="32" height="32" viewBox="0 0 32 32"><rect x="3" y="27" width="26" height="2" fill="#c8c8c8" opacity=".6"/><path d="M0.2 3.8Q3.6 9 12 9.4H17V3.8L22 8.6V3.8L32 14.6L22 25.2V20.4L17 25.2V19.6Q6 19 1.6 11Q0.2 7.4 0.2 3.8Z" fill="url(#gB)" stroke="#3f8bd8" stroke-width="1"/></svg><span class="s" style="left:2005.4px;top:151.6px;font-size:23px;line-height:30px;color:#000;transform:scaleX(0.9197);">Threads</span><div style="left:2289px;top:141px;width:1px;height:43px;background:#d9d9d9;"></div><svg style="left:2130px;top:145px" width="32" height="32" viewBox="0 0 32 32"><rect x="6" y="30" width="20" height="1.8" fill="#c8c8c8" opacity=".6"/><path d="M19 5L27.6 1.6Q31.4 2.4 32 6L29 14L21 9Z" fill="#b8b8c8" stroke="#9898a8" stroke-width="1.2"/><circle cx="17.4" cy="18.4" r="11.4" fill="#e4eeee" stroke="#9aa8a8" stroke-width="1.6"/><path d="M9 26.4Q17 31.6 25.6 25" fill="none" stroke="#b8c4c4" stroke-width="2"/><path d="M9.6 10.4L12 12.4H8.4ZM18 11.2L20.6 13.4H16.8Z" fill="#222"/><rect x="8.4" y="12.2" width="3.6" height="1.6" fill="#222"/><rect x="16.8" y="13.2" width="3.8" height="1.6" fill="#222"/><path d="M0.4 14L13.4 14.8L13.6 19.2L7.6 19Z" fill="#ea3030"/><path d="M8 17.6L13.6 17.4V19.2L9.6 19.2Z" fill="#a81010"/><path d="M11 22.4Q14 25.4 18 22.6" fill="none" stroke="#8a9a9a" stroke-width="1.4"/></svg><span class="s" style="left:2172.5px;top:151.6px;font-size:23px;line-height:30px;color:#000;transform:scaleX(0.9210);">Snowman</span><div style="left:2455px;top:141px;width:1px;height:43px;background:#d9d9d9;"></div><svg style="left:2313px;top:145px" width="32" height="32" viewBox="0 0 32 32"><rect x="3" y="29" width="26" height="1.8" fill="#c8c8c8" opacity=".6"/><rect x="1.8" y="12.8" width="14.4" height="14.6" fill="#e41424" stroke="#a80c18" stroke-width="1.6"/><rect x="3.4" y="14.4" width="11" height="3" fill="#f45c64"/><rect x="10.1" y="0.8" width="12" height="13" fill="#2a98de" stroke="#1c6eb4" stroke-width="1.6"/><rect x="11.6" y="2.2" width="9" height="3" fill="#5cc8fa"/><rect x="16.3" y="14.8" width="14" height="14.4" fill="#78bc34" stroke="#3e8424" stroke-width="1.6"/><rect x="17.8" y="16.2" width="11" height="3" fill="#a4dc64"/></svg><span class="s" style="left:2357.0px;top:151.6px;font-size:23px;line-height:30px;color:#000;transform:scaleX(0.9041);">Handles</span><div style="left:2593px;top:141px;width:1px;height:43px;background:#d9d9d9;"></div><svg style="left:2481px;top:145px" width="32" height="32" viewBox="0 0 32 32"><rect x="2" y="30" width="14" height="1.6" fill="#c8c8c8" opacity=".6"/><g transform="translate(2.8 10)" fill="#4e4e4e"><ellipse cx="5" cy="8.6" rx="3.6" ry="3.8"/><path d="M2.6 10L7.6 10.4L7 18.6Q5.4 20.2 3.4 18.8Z"/><rect x="0" y="3" width="2.2" height="2.6"/><rect x="2.6" y="0.6" width="2.2" height="2.8"/><rect x="5.6" y="0.2" width="2.2" height="2.8"/><rect x="8.4" y="1.8" width="2" height="2.6"/></g><g transform="translate(16.2 0)" fill="#4e4e4e"><ellipse cx="5" cy="8.6" rx="3.6" ry="3.8"/><path d="M2.6 10L7.6 10.4L7 18.6Q5.4 20.2 3.4 18.8Z"/><rect x="0" y="3" width="2.2" height="2.6"/><rect x="2.6" y="0.6" width="2.2" height="2.8"/><rect x="5.6" y="0.2" width="2.2" height="2.8"/><rect x="8.4" y="1.8" width="2" height="2.6"/></g></svg><span class="s" style="left:2521.9px;top:151.6px;font-size:23px;line-height:30px;color:#000;transform:scaleX(0.9404);">Trace</span><div style="left:0px;top:185px;width:177px;height:1277px;background:#fff8f0;border:1px solid #828790;"></div><svg style="left:0;top:185px" width="178" height="1277"><circle cx="163" cy="13" r="6" fill="#ff0000"/><circle cx="163" cy="35" r="6" fill="#808080"/><circle cx="163" cy="57" r="6" fill="#808080"/><circle cx="163" cy="79" r="6" fill="#808080"/><circle cx="163" cy="101" r="6" fill="#808080"/><circle cx="163" cy="123" r="6" fill="#808080"/><circle cx="163" cy="145" r="6" fill="#808080"/><circle cx="163" cy="167" r="6" fill="#808080"/><circle cx="163" cy="189" r="6" fill="#808080"/><circle cx="163" cy="211" r="6" fill="#808080"/><circle cx="163" cy="233" r="6" fill="#808080"/><circle cx="163" cy="255" r="6" fill="#808080"/><circle cx="163" cy="277" r="6" fill="#808080"/><circle cx="163" cy="299" r="6" fill="#808080"/><circle cx="163" cy="321" r="6" fill="#808080"/><circle cx="163" cy="343" r="6" fill="#808080"/><circle cx="163" cy="365" r="6" fill="#808080"/><circle cx="163" cy="387" r="6" fill="#808080"/><circle cx="163" cy="409" r="6" fill="#808080"/><circle cx="163" cy="431" r="6" fill="#808080"/><circle cx="163" cy="453" r="6" fill="#808080"/><circle cx="163" cy="475" r="6" fill="#808080"/><circle cx="163" cy="497" r="6" fill="#808080"/><circle cx="163" cy="519" r="6" fill="#808080"/><circle cx="163" cy="541" r="6" fill="#808080"/><circle cx="163" cy="563" r="6" fill="#808080"/><circle cx="163" cy="585" r="6" fill="#808080"/><circle cx="163" cy="607" r="6" fill="#808080"/><circle cx="163" cy="629" r="6" fill="#808080"/><circle cx="163" cy="651" r="6" fill="#808080"/><circle cx="163" cy="673" r="6" fill="#808080"/><circle cx="163" cy="695" r="6" fill="#808080"/><circle cx="163" cy="717" r="6" fill="#808080"/><circle cx="163" cy="739" r="6" fill="#808080"/><circle cx="163" cy="761" r="6" fill="#808080"/><circle cx="163" cy="783" r="6" fill="#808080"/><circle cx="163" cy="805" r="6" fill="#808080"/><circle cx="163" cy="827" r="6" fill="#808080"/><circle cx="163" cy="849" r="6" fill="#808080"/><circle cx="163" cy="871" r="6" fill="#808080"/><circle cx="163" cy="893" r="6" fill="#808080"/><circle cx="163" cy="915" r="6" fill="#808080"/><circle cx="163" cy="937" r="6" fill="#808080"/><circle cx="163" cy="959" r="6" fill="#808080"/><circle cx="163" cy="981" r="6" fill="#808080"/><circle cx="163" cy="1003" r="6" fill="#808080"/><circle cx="163" cy="1025" r="6" fill="#808080"/><circle cx="163" cy="1047" r="6" fill="#808080"/><circle cx="163" cy="1069" r="6" fill="#808080"/><circle cx="163" cy="1091" r="6" fill="#808080"/><circle cx="163" cy="1113" r="6" fill="#808080"/><circle cx="163" cy="1135" r="6" fill="#808080"/><circle cx="163" cy="1157" r="6" fill="#808080"/><circle cx="163" cy="1179" r="6" fill="#808080"/><circle cx="163" cy="1201" r="6" fill="#808080"/><circle cx="163" cy="1223" r="6" fill="#808080"/><circle cx="163" cy="1245" r="6" fill="#808080"/><rect x="3" y="2" width="44" height="21" fill="#4040ff"/><path d="M47 12.5H150.5M141 3.2L151 12.5L141 21" fill="none" stroke="#4040ff" stroke-width="4"/><path d="M152 760.5H80V980.5H151" fill="none" stroke="#808080" stroke-width="2" stroke-dasharray="8 3.5"/><path d="M145 973.5L152 980.5L145 987.5" fill="none" stroke="#808080" stroke-width="2"/><path d="M152 1002.5H101.5V936.5H151" fill="none" stroke="#808080" stroke-width="2"/><path d="M145 929.5L152 936.5L145 943.5" fill="none" stroke="#808080" stroke-width="2"/></svg><span class="m" style="left:7.8px;top:187.2px;font-size:20.5px;line-height:24px;color:#fff;font-weight:700;letter-spacing:0.37px;-webkit-text-stroke:0">EIP</span><div style="left:180px;top:185px;width:1299px;height:1276px;background:#fff8f0;border:1px solid #828790;"></div><div style="left:0;top:0;width:1444px;height:1428px;overflow:hidden"><div class="r" style="top:187px"><div class="c" style="left:182px;width:94px;background:#000;color:#f00;text-indent:9.2px">76E4F<b class="z">0</b>A<b class="z">0</b></div><div class="c sel" style="left:278px;width:1166px"></div><div class="c" style="left:343px;width:188px"><i class="w3">8B </i><i class="w3 dr">FF </i></div><div class="c" style="left:542px;width:389px"><i class="w3 g">mov</i><i class="w1"> </i><i class="w3 g">edi</i><i class="w1 g">,</i><i class="w3 g">edi</i></div><div class="c" style="left:940px;width:500px;color:#ff0000;text-indent:1.3px">CreateWindowExA</div></div><div class="r" style="top:209px"><div class="c g" style="left:182px;width:94px;text-indent:9.2px">76E4F<b class="z">0</b>A2</div><div class="c" style="left:343px;width:188px"><i class="w3 pu">55 </i></div><div class="c" style="left:542px;width:389px"><i class="w4 bl">push</i><i class="w1"> </i><i class="w3 rg">ebp</i></div></div><div class="r" style="top:231px"><div class="c g" style="left:182px;width:94px;text-indent:9.2px">76E4F<b class="z">0</b>A3</div><div class="c" style="left:343px;width:188px"><i class="w3">8B </i><i class="w3">EC </i></div><div class="c" style="left:542px;width:389px"><i class="w3">mov</i><i class="w1"> </i><i class="w3 rg">ebp</i><i class="w1">,</i><i class="w3 rg">esp</i></div></div><div class="r" style="top:253px"><div class="c g" style="left:182px;width:94px;text-indent:9.2px">76E4F<b class="z">0</b>A5</div><div class="c" style="left:343px;width:188px"><i class="w3 pu">33 </i><i class="w3">C<b class="z">0</b> </i></div><div class="c" style="left:542px;width:389px"><i class="w3">xor</i><i class="w1"> </i><i class="w3 rg">eax</i><i class="w1">,</i><i class="w3 rg">eax</i></div></div><div class="r" style="top:275px"><div class="c g" style="left:182px;width:94px;text-indent:9.2px">76E4F<b class="z">0</b>A7</div><div class="c" style="left:343px;width:188px"><i class="w3">8B </i><i class="w3 pu">55 </i><i class="w3 pu"><b class="z">0</b>C </i></div><div class="c" style="left:542px;width:389px"><i class="w3">mov</i><i class="w1"> </i><i class="w3 rg">edx</i><i class="w1">,</i><i class="w10 nv">dword ptr </i><i class="w2 mg">ss</i><i class="w1">:</i><i class="w1 cy"><b class="bi bo">[</b></i><i class="w3 br">ebp</i><i class="w1 or">+</i><i class="w1 ol">C</i><i class="w1 cy"><b class="bi">]</b></i></div></div><div class="r" style="top:297px"><div class="c g" style="left:182px;width:94px;text-indent:9.2px">76E4F<b class="z">0</b>AA</div><div class="c" style="left:343px;width:188px"><i class="w3 pu">5<b class="z">0</b> </i></div><div class="c" style="left:542px;width:389px"><i class="w4 bl">push</i><i class="w1"> </i><i class="w3 rg">eax</i></div></div><div class="r" style="top:319px"><div class="c g" style="left:182px;width:94px;text-indent:9.2px">76E4F<b class="z">0</b>AB</div><div class="c" style="left:343px;width:188px"><i class="w3 pu">5<b class="z">0</b> </i></div><div class="c" style="left:542px;width:389px"><i class="w4 bl">push</i><i class="w1"> </i><i class="w3 rg">eax</i></div></div><div class="r" style="top:341px"><div class="c g" style="left:182px;width:94px;text-indent:9.2px">76E4F<b class="z">0</b>AC</div><div class="c" style="left:343px;width:188px"><i class="w3 pu">68 </i><i class="w3"><b class="z">0</b>1 </i><i class="w3 gr"><b class="z">0</b><b class="z">0</b> </i><i class="w3 gr"><b class="z">0</b><b class="z">0</b> </i><i class="w3 pu">4<b class="z">0</b> </i></div><div class="c" style="left:542px;width:389px"><i class="w4 bl">push</i><i class="w1"> </i><i class="w8 ol">4<b class="z">0</b><b class="z">0</b><b class="z">0</b><b class="z">0</b><b class="z">0</b><b class="z">0</b>1</i></div></div><div class="r" style="top:363px"><div class="c g" style="left:182px;width:94px;text-indent:9.2px">76E4F<b class="z">0</b>B1</div><div class="c" style="left:343px;width:188px"><i class="w3 pu">5<b class="z">0</b> </i></div><div class="c" style="left:542px;width:389px"><i class="w4 bl">push</i><i class="w1"> </i><i class="w3 rg">eax</i></div></div><div class="r" style="top:385px"><div class="c g" style="left:182px;width:94px;text-indent:9.2px">76E4F<b class="z">0</b>B2</div><div class="c" style="left:343px;width:188px"><i class="w3 dr">FF </i><i class="w3 pu">75 </i><i class="w3 pu">34 </i></div><div class="c" style="left:542px;width:389px"><i class="w4 bl">push</i><i class="w1"> </i><i class="w10 nv">dword ptr </i><i class="w2 mg">ss</i><i class="w1">:</i><i class="w1 cy"><b class="bi bo">[</b></i><i class="w3 br">ebp</i><i class="w1 or">+</i><i class="w2 ol">34</i><i class="w1 cy"><b class="bi">]</b></i></div></div><div class="r" style="top:407px"><div class="c g" style="left:182px;width:94px;text-indent:9.2px">76E4F<b class="z">0</b>B5</div><div class="c" style="left:343px;width:188px"><i class="w3">8B </i><i class="w3 pu">4D </i><i class="w3"><b class="z">0</b>8 </i></div><div class="c" style="left:542px;width:389px"><i class="w3">mov</i><i class="w1"> </i><i class="w3 rg">ecx</i><i class="w1">,</i><i class="w10 nv">dword ptr </i><i class="w2 mg">ss</i><i class="w1">:</i><i class="w1 cy"><b class="bi bo">[</b></i><i class="w3 br">ebp</i><i class="w1 or">+</i><i class="w1 ol">8</i><i class="w1 cy"><b class="bi">]</b></i></div></div><div class="r" style="top:429px"><div class="c g" style="left:182px;width:94px;text-indent:9.2px">76E4F<b class="z">0</b>B8</div><div class="c" style="left:343px;width:188px"><i class="w3 dr">FF </i><i class="w3 pu">75 </i><i class="w3 pu">3<b class="z">0</b> </i></div><div class="c" style="left:542px;width:389px"><i class="w4 bl">push</i><i class="w1"> </i><i class="w10 nv">dword ptr </i><i class="w2 mg">ss</i><i class="w1">:</i><i class="w1 cy"><b class="bi bo">[</b></i><i class="w3 br">ebp</i><i class="w1 or">+</i><i class="w2 ol">3<b class="z">0</b></i><i class="w1 cy"><b class="bi">]</b></i></div></div><div class="r" style="top:451px"><div class="c g" style="left:182px;width:94px;text-indent:9.2px">76E4F<b class="z">0</b>BB</div><div class="c" style="left:343px;width:188px"><i class="w3 dr">FF </i><i class="w3 pu">75 </i><i class="w3 pu">2C </i></div><div class="c" style="left:542px;width:389px"><i class="w4 bl">push</i><i class="w1"> </i><i class="w10 nv">dword ptr </i><i class="w2 mg">ss</i><i class="w1">:</i><i class="w1 cy"><b class="bi bo">[</b></i><i class="w3 br">ebp</i><i class="w1 or">+</i><i class="w2 ol">2C</i><i class="w1 cy"><b class="bi">]</b></i></div></div><div class="r" style="top:473px"><div class="c g" style="left:182px;width:94px;text-indent:9.2px">76E4F<b class="z">0</b>BE</div><div class="c" style="left:343px;width:188px"><i class="w3 dr">FF </i><i class="w3 pu">75 </i><i class="w3 pu">28 </i></div><div class="c" style="left:542px;width:389px"><i class="w4 bl">push</i><i class="w1"> </i><i class="w10 nv">dword ptr </i><i class="w2 mg">ss</i><i class="w1">:</i><i class="w1 cy"><b class="bi bo">[</b></i><i class="w3 br">ebp</i><i class="w1 or">+</i><i class="w2 ol">28</i><i class="w1 cy"><b class="bi">]</b></i></div></div><div class="r" style="top:495px"><div class="c g" style="left:182px;width:94px;text-indent:9.2px">76E4F<b class="z">0</b>C1</div><div class="c" style="left:343px;width:188px"><i class="w3 dr">FF </i><i class="w3 pu">75 </i><i class="w3 pu">24 </i></div><div class="c" style="left:542px;width:389px"><i class="w4 bl">push</i><i class="w1"> </i><i class="w10 nv">dword ptr </i><i class="w2 mg">ss</i><i class="w1">:</i><i class="w1 cy"><b class="bi bo">[</b></i><i class="w3 br">ebp</i><i class="w1 or">+</i><i class="w2 ol">24</i><i class="w1 cy"><b class="bi">]</b></i></div></div><div class="r" style="top:517px"><div class="c g" style="left:182px;width:94px;text-indent:9.2px">76E4F<b class="z">0</b>C4</div><div class="c" style="left:343px;width:188px"><i class="w3 dr">FF </i><i class="w3 pu">75 </i><i class="w3 pu">2<b class="z">0</b> </i></div><div class="c" style="left:542px;width:389px"><i class="w4 bl">push</i><i class="w1"> </i><i class="w10 nv">dword ptr </i><i class="w2 mg">ss</i><i class="w1">:</i><i class="w1 cy"><b class="bi bo">[</b></i><i class="w3 br">ebp</i><i class="w1 or">+</i><i class="w2 ol">2<b class="z">0</b></i><i class="w1 cy"><b class="bi">]</b></i></div></div><div class="r" style="top:539px"><div class="c g" style="left:182px;width:94px;text-indent:9.2px">76E4F<b class="z">0</b>C7</div><div class="c" style="left:343px;width:188px"><i class="w3 dr">FF </i><i class="w3 pu">75 </i><i class="w3">1C </i></div><div class="c" style="left:542px;width:389px"><i class="w4 bl">push</i><i class="w1"> </i><i class="w10 nv">dword ptr </i><i class="w2 mg">ss</i><i class="w1">:</i><i class="w1 cy"><b class="bi bo">[</b></i><i class="w3 br">ebp</i><i class="w1 or">+</i><i class="w2 ol">1C</i><i class="w1 cy"><b class="bi">]</b></i></div><div class="c" style="left:940px;width:500px;color:#ae5700;text-indent:1.3px"><b class="bi bo">[</b>ebp+1C<b class="bi">]</b>:EntryPoint</div></div><div class="r" style="top:561px"><div class="c g" style="left:182px;width:94px;text-indent:9.2px">76E4F<b class="z">0</b>CA</div><div class="c" style="left:343px;width:188px"><i class="w3 dr">FF </i><i class="w3 pu">75 </i><i class="w3">18 </i></div><div class="c" style="left:542px;width:389px"><i class="w4 bl">push</i><i class="w1"> </i><i class="w10 nv">dword ptr </i><i class="w2 mg">ss</i><i class="w1">:</i><i class="w1 cy"><b class="bi bo">[</b></i><i class="w3 br">ebp</i><i class="w1 or">+</i><i class="w2 ol">18</i><i class="w1 cy"><b class="bi">]</b></i></div><div class="c" style="left:940px;width:500px;color:#ae5700;text-indent:1.3px"><b class="bi bo">[</b>ebp+18<b class="bi">]</b>:EntryPoint</div></div><div class="r" style="top:583px"><div class="c g" style="left:182px;width:94px;text-indent:9.2px">76E4F<b class="z">0</b>CD</div><div class="c" style="left:343px;width:188px"><i class="w3 dr">FF </i><i class="w3 pu">75 </i><i class="w3">14 </i></div><div class="c" style="left:542px;width:389px"><i class="w4 bl">push</i><i class="w1"> </i><i class="w10 nv">dword ptr </i><i class="w2 mg">ss</i><i class="w1">:</i><i class="w1 cy"><b class="bi bo">[</b></i><i class="w3 br">ebp</i><i class="w1 or">+</i><i class="w2 ol">14</i><i class="w1 cy"><b class="bi">]</b></i></div></div><div class="r" style="top:605px"><div class="c g" style="left:182px;width:94px;text-indent:9.2px">76E4F<b class="z">0</b>D<b class="z">0</b></div><div class="c" style="left:343px;width:188px"><i class="w3 dr">FF </i><i class="w3 pu">75 </i><i class="w3">1<b class="z">0</b> </i></div><div class="c" style="left:542px;width:389px"><i class="w4 bl">push</i><i class="w1"> </i><i class="w10 nv">dword ptr </i><i class="w2 mg">ss</i><i class="w1">:</i><i class="w1 cy"><b class="bi bo">[</b></i><i class="w3 br">ebp</i><i class="w1 or">+</i><i class="w2 ol">1<b class="z">0</b></i><i class="w1 cy"><b class="bi">]</b></i></div></div><div class="r" style="top:627px"><div class="c g" style="left:182px;width:94px;text-indent:9.2px">76E4F<b class="z">0</b>D3</div><div class="c" style="left:343px;width:188px"><i class="w3">E8 </i><i class="w3 pu">24 </i><i class="w3"><b class="z">0</b>6 </i><i class="w3">FE </i><i class="w3 dr">FF </i></div><div class="c" style="left:542px;width:389px"><i class="w4 cy">call</i><i class="w1"> </i><i class="w15 ye">user32.76E2F6FC</i></div></div><div class="r" style="top:649px"><div class="c g" style="left:182px;width:94px;text-indent:9.2px">76E4F<b class="z">0</b>D8</div><div class="c" style="left:343px;width:188px"><i class="w3 pu">5D </i></div><div class="c" style="left:542px;width:389px"><i class="w3 bl">pop</i><i class="w1"> </i><i class="w3 rg">ebp</i></div></div><div class="r" style="top:671px"><div class="c g" style="left:182px;width:94px;text-indent:9.2px">76E4F<b class="z">0</b>D9</div><div class="c" style="left:343px;width:188px"><i class="w3">C2 </i><i class="w3 pu">3<b class="z">0</b> </i><i class="w3 gr"><b class="z">0</b><b class="z">0</b> </i></div><div class="c" style="left:542px;width:389px"><i class="w3 cy">ret</i><i class="w1"> </i><i class="w2 ol">3<b class="z">0</b></i></div></div><div class="r" style="top:693px"><div class="c g" style="left:182px;width:94px;text-indent:9.2px">76E4F<b class="z">0</b>DC</div><div class="c" style="left:343px;width:188px"><i class="w3">CC </i></div><div class="c" style="left:542px;width:389px"><i class="w4">int3</i></div></div><div class="r" style="top:715px"><div class="c g" style="left:182px;width:94px;text-indent:9.2px">76E4F<b class="z">0</b>DD</div><div class="c" style="left:343px;width:188px"><i class="w3">CC </i></div><div class="c" style="left:542px;width:389px"><i class="w4">int3</i></div></div><div class="r" style="top:737px"><div class="c g" style="left:182px;width:94px;text-indent:9.2px">76E4F<b class="z">0</b>DE</div><div class="c" style="left:343px;width:188px"><i class="w3">CC </i></div><div class="c" style="left:542px;width:389px"><i class="w4">int3</i></div></div><div class="r" style="top:759px"><div class="c g" style="left:182px;width:94px;text-indent:9.2px">76E4F<b class="z">0</b>DF</div><div class="c" style="left:343px;width:188px"><i class="w3">CC </i></div><div class="c" style="left:542px;width:389px"><i class="w4">int3</i></div></div><div class="r" style="top:781px"><div class="c g" style="left:182px;width:94px;text-indent:9.2px">76E4F<b class="z">0</b>E<b class="z">0</b></div><div class="c" style="left:343px;width:188px"><i class="w3">8B </i><i class="w3 dr">FF </i></div><div class="c" style="left:542px;width:389px"><i class="w3 g">mov</i><i class="w1"> </i><i class="w3 g">edi</i><i class="w1 g">,</i><i class="w3 g">edi</i></div></div><div class="r" style="top:803px"><div class="c g" style="left:182px;width:94px;text-indent:9.2px">76E4F<b class="z">0</b>E2</div><div class="c" style="left:343px;width:188px"><i class="w3 pu">55 </i></div><div class="c" style="left:542px;width:389px"><i class="w4 bl">push</i><i class="w1"> </i><i class="w3 rg">ebp</i></div></div><div class="r" style="top:825px"><div class="c g" style="left:182px;width:94px;text-indent:9.2px">76E4F<b class="z">0</b>E3</div><div class="c" style="left:343px;width:188px"><i class="w3">8B </i><i class="w3">EC </i></div><div class="c" style="left:542px;width:389px"><i class="w3">mov</i><i class="w1"> </i><i class="w3 rg">ebp</i><i class="w1">,</i><i class="w3 rg">esp</i></div></div><div class="r" style="top:847px"><div class="c g" style="left:182px;width:94px;text-indent:9.2px">76E4F<b class="z">0</b>E5</div><div class="c" style="left:343px;width:188px"><i class="w3">8B </i><i class="w3 pu">4D </i><i class="w3"><b class="z">0</b>8 </i></div><div class="c" style="left:542px;width:389px"><i class="w3">mov</i><i class="w1"> </i><i class="w3 rg">ecx</i><i class="w1">,</i><i class="w10 nv">dword ptr </i><i class="w2 mg">ss</i><i class="w1">:</i><i class="w1 cy"><b class="bi bo">[</b></i><i class="w3 br">ebp</i><i class="w1 or">+</i><i class="w1 ol">8</i><i class="w1 cy"><b class="bi">]</b></i></div></div><div class="r" style="top:869px"><div class="c g" style="left:182px;width:94px;text-indent:9.2px">76E4F<b class="z">0</b>E8</div><div class="c" style="left:343px;width:188px"><i class="w3">E8 </i><i class="w3">18 </i><i class="w3 pu">42 </i><i class="w3">FE </i><i class="w3 dr">FF </i></div><div class="c" style="left:542px;width:389px"><i class="w4 cy">call</i><i class="w1"> </i><i class="w15 ye">user32.76E333<b class="z">0</b>5</i></div></div><div class="r" style="top:891px"><div class="c g" style="left:182px;width:94px;text-indent:9.2px">76E4F<b class="z">0</b>ED</div><div class="c" style="left:343px;width:188px"><i class="w3">8B </i><i class="w3">C8 </i></div><div class="c" style="left:542px;width:389px"><i class="w3">mov</i><i class="w1"> </i><i class="w3 rg">ecx</i><i class="w1">,</i><i class="w3 rg">eax</i></div></div><div class="r" style="top:913px"><div class="c g" style="left:182px;width:94px;text-indent:9.2px">76E4F<b class="z">0</b>EF</div><div class="c" style="left:343px;width:188px"><i class="w3 pu"><b class="z">0</b>B </i><i class="w3">CA </i></div><div class="c" style="left:542px;width:389px"><i class="w2">or</i><i class="w1"> </i><i class="w3 rg">ecx</i><i class="w1">,</i><i class="w3 rg">edx</i></div></div><div class="r" style="top:935px"><div class="c g" style="left:182px;width:94px;text-indent:9.2px">76E4F<b class="z">0</b>F1</div><div class="c" style="left:343px;width:188px"><i class="w3 pu">74 </i><i class="w3">16 </i></div><div class="c" style="left:542px;width:389px"><i class="w2 ye rd">je</i><i class="w1"> </i><i class="w15 ye">user32.76E4F1<b class="z">0</b>9</i></div></div><div class="r" style="top:957px"><div class="c g" style="left:182px;width:94px;text-indent:9.2px">76E4F<b class="z">0</b>F3</div><div class="c" style="left:343px;width:188px"><i class="w3 pu">6A </i><i class="w3"><b class="z">0</b>1 </i></div><div class="c" style="left:542px;width:389px"><i class="w4 bl">push</i><i class="w1"> </i><i class="w1 ol">1</i></div></div><div class="r" style="top:979px"><div class="c g" style="left:182px;width:94px;text-indent:9.2px">76E4F<b class="z">0</b>F5</div><div class="c" style="left:343px;width:188px"><i class="w3 dr">FF </i><i class="w3 pu">75 </i><i class="w3">14 </i></div><div class="c" style="left:542px;width:389px"><i class="w4 bl">push</i><i class="w1"> </i><i class="w10 nv">dword ptr </i><i class="w2 mg">ss</i><i class="w1">:</i><i class="w1 cy"><b class="bi bo">[</b></i><i class="w3 br">ebp</i><i class="w1 or">+</i><i class="w2 ol">14</i><i class="w1 cy"><b class="bi">]</b></i></div></div><div class="r" style="top:1001px"><div class="c g" style="left:182px;width:94px;text-indent:9.2px">76E4F<b class="z">0</b>F8</div><div class="c" style="left:343px;width:188px"><i class="w3 dr">FF </i><i class="w3 pu">75 </i><i class="w3">1<b class="z">0</b> </i></div><div class="c" style="left:542px;width:389px"><i class="w4 bl">push</i><i class="w1"> </i><i class="w10 nv">dword ptr </i><i class="w2 mg">ss</i><i class="w1">:</i><i class="w1 cy"><b class="bi bo">[</b></i><i class="w3 br">ebp</i><i class="w1 or">+</i><i class="w2 ol">1<b class="z">0</b></i><i class="w1 cy"><b class="bi">]</b></i></div></div><div class="r" style="top:1023px"><div class="c g" style="left:182px;width:94px;text-indent:9.2px">76E4F<b class="z">0</b>FB</div><div class="c" style="left:343px;width:188px"><i class="w3 dr">FF </i><i class="w3 pu">75 </i><i class="w3 pu"><b class="z">0</b>C </i></div><div class="c" style="left:542px;width:389px"><i class="w4 bl">push</i><i class="w1"> </i><i class="w10 nv">dword ptr </i><i class="w2 mg">ss</i><i class="w1">:</i><i class="w1 cy"><b class="bi bo">[</b></i><i class="w3 br">ebp</i><i class="w1 or">+</i><i class="w1 ol">C</i><i class="w1 cy"><b class="bi">]</b></i></div></div><div class="r" style="top:1045px"><div class="c g" style="left:182px;width:94px;text-indent:9.2px">76E4F<b class="z">0</b>FE</div><div class="c" style="left:343px;width:188px"><i class="w3 pu">52 </i></div><div class="c" style="left:542px;width:389px"><i class="w4 bl">push</i><i class="w1"> </i><i class="w3 rg">edx</i></div></div><div class="r" style="top:1067px"><div class="c g" style="left:182px;width:94px;text-indent:9.2px">76E4F<b class="z">0</b>FF</div><div class="c" style="left:343px;width:188px"><i class="w3 pu">5<b class="z">0</b> </i></div><div class="c" style="left:542px;width:389px"><i class="w4 bl">push</i><i class="w1"> </i><i class="w3 rg">eax</i></div></div><div class="r" style="top:1089px"><div class="c g" style="left:182px;width:94px;text-indent:9.2px">76E4F1<b class="z">0</b><b class="z">0</b></div><div class="c" style="left:343px;width:188px"><i class="w3">E8 </i><i class="w3">AB </i><i class="w3 pu">63 </i><i class="w3">FE </i><i class="w3 dr">FF </i></div><div class="c" style="left:542px;width:389px"><i class="w4 cy">call</i><i class="w1"> </i><i class="w15 ye">user32.76E354B<b class="z">0</b></i></div></div><div class="r" style="top:1111px"><div class="c g" style="left:182px;width:94px;text-indent:9.2px">76E4F1<b class="z">0</b>5</div><div class="c" style="left:343px;width:188px"><i class="w3 pu">5D </i></div><div class="c" style="left:542px;width:389px"><i class="w3 bl">pop</i><i class="w1"> </i><i class="w3 rg">ebp</i></div></div><div class="r" style="top:1133px"><div class="c g" style="left:182px;width:94px;text-indent:9.2px">76E4F1<b class="z">0</b>6</div><div class="c" style="left:343px;width:188px"><i class="w3">C2 </i><i class="w3">1<b class="z">0</b> </i><i class="w3 gr"><b class="z">0</b><b class="z">0</b> </i></div><div class="c" style="left:542px;width:389px"><i class="w3 cy">ret</i><i class="w1"> </i><i class="w2 ol">1<b class="z">0</b></i></div></div><div class="r" style="top:1155px"><div class="c g" style="left:182px;width:94px;text-indent:9.2px">76E4F1<b class="z">0</b>9</div><div class="c" style="left:343px;width:188px"><i class="w3 pu">33 </i><i class="w3">C<b class="z">0</b> </i></div><div class="c" style="left:542px;width:389px"><i class="w3">xor</i><i class="w1"> </i><i class="w3 rg">eax</i><i class="w1">,</i><i class="w3 rg">eax</i></div></div><div class="r" style="top:1177px"><div class="c g" style="left:182px;width:94px;text-indent:9.2px">76E4F1<b class="z">0</b>B</div><div class="c" style="left:343px;width:188px"><i class="w3">EB </i><i class="w3">F8 </i></div><div class="c" style="left:542px;width:389px"><i class="w3 ye">jmp</i><i class="w1"> </i><i class="w15 ye">user32.76E4F1<b class="z">0</b>5</i></div></div><div class="r" style="top:1199px"><div class="c g" style="left:182px;width:94px;text-indent:9.2px">76E4F1<b class="z">0</b>D</div><div class="c" style="left:343px;width:188px"><i class="w3">8B </i><i class="w3 dr">FF </i></div><div class="c" style="left:542px;width:389px"><i class="w3 g">mov</i><i class="w1"> </i><i class="w3 g">edi</i><i class="w1 g">,</i><i class="w3 g">edi</i></div></div><div class="r" style="top:1221px"><div class="c g" style="left:182px;width:94px;text-indent:9.2px">76E4F1<b class="z">0</b>F</div><div class="c" style="left:343px;width:188px"><i class="w3 pu">55 </i></div><div class="c" style="left:542px;width:389px"><i class="w4 bl">push</i><i class="w1"> </i><i class="w3 rg">ebp</i></div></div><div class="r" style="top:1243px"><div class="c g" style="left:182px;width:94px;text-indent:9.2px">76E4F11<b class="z">0</b></div><div class="c" style="left:343px;width:188px"><i class="w3">8B </i><i class="w3">EC </i></div><div class="c" style="left:542px;width:389px"><i class="w3">mov</i><i class="w1"> </i><i class="w3 rg">ebp</i><i class="w1">,</i><i class="w3 rg">esp</i></div></div><div class="r" style="top:1265px"><div class="c g" style="left:182px;width:94px;text-indent:9.2px">76E4F112</div><div class="c" style="left:343px;width:188px"><i class="w3">83 </i><i class="w3">EC </i><i class="w3 pu">24 </i></div><div class="c" style="left:542px;width:389px"><i class="w3">sub</i><i class="w1"> </i><i class="w3 rg">esp</i><i class="w1">,</i><i class="w2 ol">24</i></div></div><div class="r" style="top:1287px"><div class="c g" style="left:182px;width:94px;text-indent:9.2px">76E4F115</div><div class="c" style="left:343px;width:188px"><i class="w3 pu">53 </i></div><div class="c" style="left:542px;width:389px"><i class="w4 bl">push</i><i class="w1"> </i><i class="w3 rg">ebx</i></div></div><div class="r" style="top:1309px"><div class="c g" style="left:182px;width:94px;text-indent:9.2px">76E4F116</div><div class="c" style="left:343px;width:188px"><i class="w3 pu">56 </i></div><div class="c" style="left:542px;width:389px"><i class="w4 bl">push</i><i class="w1"> </i><i class="w3 rg">esi</i></div><div class="c" style="left:940px;width:500px;color:#ae5700;text-indent:1.3px">esi:GetSystemMetrics</div></div><div class="r" style="top:1331px"><div class="c g" style="left:182px;width:94px;text-indent:9.2px">76E4F117</div><div class="c" style="left:343px;width:188px"><i class="w3">8B </i><i class="w3">C1 </i></div><div class="c" style="left:542px;width:389px"><i class="w3">mov</i><i class="w1"> </i><i class="w3 rg">eax</i><i class="w1">,</i><i class="w3 rg">ecx</i></div></div><div class="r" style="top:1353px"><div class="c g" style="left:182px;width:94px;text-indent:9.2px">76E4F119</div><div class="c" style="left:343px;width:188px"><i class="w3">89 </i><i class="w3 pu">55 </i><i class="w3">F4 </i></div><div class="c" style="left:542px;width:389px"><i class="w3">mov</i><i class="w1"> </i><i class="w10 nv">dword ptr </i><i class="w2 mg">ss</i><i class="w1">:</i><i class="w1 cy"><b class="bi bo">[</b></i><i class="w3 br">ebp</i><i class="w1 or">-</i><i class="w1 ol">C</i><i class="w1 cy"><b class="bi">]</b></i><i class="w1">,</i><i class="w3 rg">edx</i></div></div><div class="r" style="top:1375px"><div class="c g" style="left:182px;width:94px;text-indent:9.2px">76E4F11C</div><div class="c" style="left:343px;width:188px"><i class="w3 pu">57 </i></div><div class="c" style="left:542px;width:389px"><i class="w4 bl">push</i><i class="w1"> </i><i class="w3 rg">edi</i></div></div><div class="r" style="top:1397px"><div class="c g" style="left:182px;width:94px;text-indent:9.2px">76E4F11D</div><div class="c" style="left:343px;width:188px"><i class="w3">89 </i><i class="w3 pu">45 </i><i class="w3">FC </i></div><div class="c" style="left:542px;width:389px"><i class="w3">mov</i><i class="w1"> </i><i class="w10 nv">dword ptr </i><i class="w2 mg">ss</i><i class="w1">:</i><i class="w1 cy"><b class="bi bo">[</b></i><i class="w3 br">ebp</i><i class="w1 or">-</i><i class="w1 ol">4</i><i class="w1 cy"><b class="bi">]</b></i><i class="w1">,</i><i class="w3 rg">eax</i></div></div><div class="r" style="top:1419px"><div class="c g" style="left:182px;width:94px;text-indent:9.2px">76E4F12<b class="z">0</b></div><div class="c" style="left:343px;width:188px"><i class="w3">E8 </i><i class="w3">E<b class="z">0</b> </i><i class="w3 pu">41 </i><i class="w3">FE </i><i class="w3 dr">FF </i></div><div class="c" style="left:542px;width:389px"><i class="w4 cy">call</i><i class="w1"> </i><i class="w15 ye">user32.76E333<b class="z">0</b>5</i></div></div></div><svg style="left:308px;top:935px" width="16" height="22" fill="none" stroke="#f00" stroke-width="2"><path d="M3.5 7.5L8 12L12.5 7.5"/></svg><svg style="left:308px;top:1177px" width="16" height="22" fill="none" stroke="#f00" stroke-width="2"><path d="M3.5 13L8 8.5L12.5 13"/></svg><div style="left:275px;top:187px;width:2px;height:1241px;background:#808080;"></div><div style="left:531px;top:187px;width:2px;height:1241px;background:#808080;"></div><div style="left:931px;top:187px;width:2px;height:1241px;background:#808080;"></div><div style="left:1444px;top:187px;width:34px;height:1241px;background:#f0f0f0;"></div><div style="left:1444px;top:657px;width:34px;height:36px;background:#cdcdcd;"></div><svg style="left:1444px;top:187px" width="34" height="1241" fill="none" stroke="#606060" stroke-width="2.6"><path d="M12.0 21.3L17.0 16L22.0 21.3"/><path d="M12.0 1219.7L17.0 1225L22.0 1219.7"/></svg><div style="left:181px;top:1428px;width:1263px;height:32px;background:#f0f0f0;"></div><div style="left:216px;top:1428px;width:556px;height:32px;background:#cdcdcd;"></div><svg style="left:181px;top:1428px" width="1263" height="32" fill="none" stroke="#606060" stroke-width="2.6"><path d="M20.3 11.0L15 16.0L20.3 21.0"/><path d="M1242.7 11.0L1248 16.0L1242.7 21.0"/></svg><div style="left:1444px;top:1428px;width:34px;height:32px;background:#f0f0f0;"></div><div style="left:0px;top:1465px;width:1479px;height:99px;background:#fff8f0;border:1px solid #828790;"></div><span class="m" style="left:11.0px;top:1466.2px;">edi=thawk2.<b class="z">0</b>29D4FE3</span><span class="m" style="left:11.0px;top:1532.2px;">.text:76E4F<b class="z">0</b>A<b class="z">0</b> user32.dll:$3F<b class="z">0</b>A<b class="z">0</b> #3E4A<b class="z">0</b> &lt;CreateWindowExA&gt;</span><div style="left:1483px;top:186px;width:2356px;height:40px;background:#e1e1e1;border:1px solid #adadad;"></div><span class="m" style="left:1505.0px;top:194.4px;">Hide FPU</span><div style="left:1482px;top:227px;width:1999px;height:668px;background:#fff8f0;border-left:1px solid #828790;border-right:1px solid #828790;"></div><span class="m" style="left:1499.8px;top:223.5px;">ZF</span><span class="m" style="left:1541.8px;top:223.5px;color:#ff0000;"><b class="z">0</b></span><span class="m" style="left:1583.8px;top:223.5px;">PF</span><span class="m" style="left:1625.8px;top:223.5px;color:#ff0000;"><b class="z">0</b></span><span class="m" style="left:1667.8px;top:223.5px;">AF</span><span class="m" style="left:1709.8px;top:223.5px;"><b class="z">0</b></span><span class="m" style="left:1499.8px;top:247.5px;">OF</span><span class="m" style="left:1541.8px;top:247.5px;"><b class="z">0</b></span><span class="m" style="left:1583.8px;top:247.5px;">SF</span><span class="m" style="left:1625.8px;top:247.5px;"><b class="z">0</b></span><span class="m" style="left:1667.8px;top:247.5px;">DF</span><span class="m" style="left:1709.8px;top:247.5px;"><b class="z">0</b></span><span class="m" style="left:1499.8px;top:271.5px;">CF</span><span class="m" style="left:1541.8px;top:271.5px;"><b class="z">0</b></span><span class="m" style="left:1583.8px;top:271.5px;">TF</span><span class="m" style="left:1625.8px;top:271.5px;color:#ff0000;">1</span><span class="m" style="left:1667.8px;top:271.5px;">IF</span><span class="m" style="left:1709.8px;top:271.5px;">1</span><span class="m" style="left:1499.8px;top:319.5px;">LastError</span><span class="m" style="left:1639.8px;top:319.5px;color:#ff0000;"><b class="z">0</b><b class="z">0</b><b class="z">0</b><b class="z">0</b><b class="z">0</b><b class="z">0</b><b class="z">0</b><b class="z">0</b> (ERROR_SUCCESS)</span><span class="m" style="left:1499.8px;top:367.5px;">GS</span><span class="m" style="left:1541.8px;top:367.5px;"><b class="z">0</b><b class="z">0</b>2B</span><span class="m" style="left:1625.8px;top:367.5px;">FS</span><span class="m" style="left:1667.8px;top:367.5px;"><b class="z">0</b><b class="z">0</b>53</span><span class="m" style="left:1499.8px;top:391.5px;">ES</span><span class="m" style="left:1541.8px;top:391.5px;"><b class="z">0</b><b class="z">0</b>2B</span><span class="m" style="left:1625.8px;top:391.5px;">DS</span><span class="m" style="left:1667.8px;top:391.5px;"><b class="z">0</b><b class="z">0</b>2B</span><span class="m" style="left:1499.8px;top:415.5px;">CS</span><span class="m" style="left:1541.8px;top:415.5px;"><b class="z">0</b><b class="z">0</b>23</span><span class="m" style="left:1625.8px;top:415.5px;">SS</span><span class="m" style="left:1667.8px;top:415.5px;"><b class="z">0</b><b class="z">0</b>2B</span><span class="m" style="left:1499.8px;top:463.5px;">x87r<b class="z">0</b></span><span class="m" style="left:1583.8px;top:463.5px;"><b class="z">0</b><b class="z">0</b><b class="z">0</b><b class="z">0</b><b class="z">0</b><b class="z">0</b><b class="z">0</b><b class="z">0</b><b class="z">0</b><b class="z">0</b><b class="z">0</b><b class="z">0</b><b class="z">0</b><b class="z">0</b><b class="z">0</b><b class="z">0</b><b class="z">0</b><b class="z">0</b><b class="z">0</b><b class="z">0</b></span><span class="m" style="left:1863.8px;top:463.5px;">ST<b class="z">0</b> Empty <b class="z">0</b>.<b class="z">0</b><b class="z">0</b><b class="z">0</b><b class="z">0</b><b class="z">0</b><b class="z">0</b><b class="z">0</b><b class="z">0</b><b class="z">0</b><b class="z">0</b><b class="z">0</b><b class="z">0</b><b class="z">0</b><b class="z">0</b><b class="z">0</b><b class="z">0</b><b class="z">0</b><b class="z">0</b></span><span class="m" style="left:1499.8px;top:487.5px;">x87r1</span><span class="m" style="left:1583.8px;top:487.5px;"><b class="z">0</b><b class="z">0</b><b class="z">0</b><b class="z">0</b><b class="z">0</b><b class="z">0</b><b class="z">0</b><b class="z">0</b><b class="z">0</b><b class="z">0</b><b class="z">0</b><b class="z">0</b><b class="z">0</b><b class="z">0</b><b class="z">0</b><b class="z">0</b><b class="z">0</b><b class="z">0</b><b class="z">0</b><b class="z">0</b></span><span class="m" style="left:1863.8px;top:487.5px;">ST1 Empty <b class="z">0</b>.<b class="z">0</b><b class="z">0</b><b class="z">0</b><b class="z">0</b><b class="z">0</b><b class="z">0</b><b class="z">0</b><b class="z">0</b><b class="z">0</b><b class="z">0</b><b class="z">0</b><b class="z">0</b><b class="z">0</b><b class="z">0</b><b class="z">0</b><b class="z">0</b><b class="z">0</b><b class="z">0</b></span><span class="m" style="left:1499.8px;top:511.5px;">x87r2</span><span class="m" style="left:1583.8px;top:511.5px;"><b class="z">0</b><b class="z">0</b><b class="z">0</b><b class="z">0</b><b class="z">0</b><b class="z">0</b><b class="z">0</b><b class="z">0</b><b class="z">0</b><b class="z">0</b><b class="z">0</b><b class="z">0</b><b class="z">0</b><b class="z">0</b><b class="z">0</b><b class="z">0</b><b class="z">0</b><b class="z">0</b><b class="z">0</b><b class="z">0</b></span><span class="m" style="left:1863.8px;top:511.5px;">ST2 Empty <b class="z">0</b>.<b class="z">0</b><b class="z">0</b><b class="z">0</b><b class="z">0</b><b class="z">0</b><b class="z">0</b><b class="z">0</b><b class="z">0</b><b class="z">0</b><b class="z">0</b><b class="z">0</b><b class="z">0</b><b class="z">0</b><b class="z">0</b><b class="z">0</b><b class="z">0</b><b class="z">0</b><b class="z">0</b></span><span class="m" style="left:1499.8px;top:535.5px;">x87r3</span><span class="m" style="left:1583.8px;top:535.5px;"><b class="z">0</b><b class="z">0</b><b class="z">0</b><b class="z">0</b><b class="z">0</b><b class="z">0</b><b class="z">0</b><b class="z">0</b><b class="z">0</b><b class="z">0</b><b class="z">0</b><b class="z">0</b><b class="z">0</b><b class="z">0</b><b class="z">0</b><b class="z">0</b><b class="z">0</b><b class="z">0</b><b class="z">0</b><b class="z">0</b></span><span class="m" style="left:1863.8px;top:535.5px;">ST3 Empty <b class="z">0</b>.<b class="z">0</b><b class="z">0</b><b class="z">0</b><b class="z">0</b><b class="z">0</b><b class="z">0</b><b class="z">0</b><b class="z">0</b><b class="z">0</b><b class="z">0</b><b class="z">0</b><b class="z">0</b><b class="z">0</b><b class="z">0</b><b class="z">0</b><b class="z">0</b><b class="z">0</b><b class="z">0</b></span><span class="m" style="left:1499.8px;top:559.5px;">x87r4</span><span class="m" style="left:1583.8px;top:559.5px;"><b class="z">0</b><b class="z">0</b><b class="z">0</b><b class="z">0</b><b class="z">0</b><b class="z">0</b><b class="z">0</b><b class="z">0</b><b class="z">0</b><b class="z">0</b><b class="z">0</b><b class="z">0</b><b class="z">0</b><b class="z">0</b><b class="z">0</b><b class="z">0</b><b class="z">0</b><b class="z">0</b><b class="z">0</b><b class="z">0</b></span><span class="m" style="left:1863.8px;top:559.5px;">ST4 Empty <b class="z">0</b>.<b class="z">0</b><b class="z">0</b><b class="z">0</b><b class="z">0</b><b class="z">0</b><b class="z">0</b><b class="z">0</b><b class="z">0</b><b class="z">0</b><b class="z">0</b><b class="z">0</b><b class="z">0</b><b class="z">0</b><b class="z">0</b><b class="z">0</b><b class="z">0</b><b class="z">0</b><b class="z">0</b></span><span class="m" style="left:1499.8px;top:583.5px;">x87r5</span><span class="m" style="left:1583.8px;top:583.5px;"><b class="z">0</b><b class="z">0</b><b class="z">0</b><b class="z">0</b><b class="z">0</b><b class="z">0</b><b class="z">0</b><b class="z">0</b><b class="z">0</b><b class="z">0</b><b class="z">0</b><b class="z">0</b><b class="z">0</b><b class="z">0</b><b class="z">0</b><b class="z">0</b><b class="z">0</b><b class="z">0</b><b class="z">0</b><b class="z">0</b></span><span class="m" style="left:1863.8px;top:583.5px;">ST5 Empty <b class="z">0</b>.<b class="z">0</b><b class="z">0</b><b class="z">0</b><b class="z">0</b><b class="z">0</b><b class="z">0</b><b class="z">0</b><b class="z">0</b><b class="z">0</b><b class="z">0</b><b class="z">0</b><b class="z">0</b><b class="z">0</b><b class="z">0</b><b class="z">0</b><b class="z">0</b><b class="z">0</b><b class="z">0</b></span><span class="m" style="left:1499.8px;top:607.5px;">x87r6</span><span class="m" style="left:1583.8px;top:607.5px;"><b class="z">0</b><b class="z">0</b><b class="z">0</b><b class="z">0</b><b class="z">0</b><b class="z">0</b><b class="z">0</b><b class="z">0</b><b class="z">0</b><b class="z">0</b><b class="z">0</b><b class="z">0</b><b class="z">0</b><b class="z">0</b><b class="z">0</b><b class="z">0</b><b class="z">0</b><b class="z">0</b><b class="z">0</b><b class="z">0</b></span><span class="m" style="left:1863.8px;top:607.5px;">ST6 Empty <b class="z">0</b>.<b class="z">0</b><b class="z">0</b><b class="z">0</b><b class="z">0</b><b class="z">0</b><b class="z">0</b><b class="z">0</b><b class="z">0</b><b class="z">0</b><b class="z">0</b><b class="z">0</b><b class="z">0</b><b class="z">0</b><b class="z">0</b><b class="z">0</b><b class="z">0</b><b class="z">0</b><b class="z">0</b></span><span class="m" style="left:1499.8px;top:631.5px;">x87r7</span><span class="m" style="left:1583.8px;top:631.5px;"><b class="z">0</b><b class="z">0</b><b class="z">0</b><b class="z">0</b><b class="z">0</b><b class="z">0</b><b class="z">0</b><b class="z">0</b><b class="z">0</b><b class="z">0</b><b class="z">0</b><b class="z">0</b><b class="z">0</b><b class="z">0</b><b class="z">0</b><b class="z">0</b><b class="z">0</b><b class="z">0</b><b class="z">0</b><b class="z">0</b></span><span class="m" style="left:1863.8px;top:631.5px;">ST7 Empty <b class="z">0</b>.<b class="z">0</b><b class="z">0</b><b class="z">0</b><b class="z">0</b><b class="z">0</b><b class="z">0</b><b class="z">0</b><b class="z">0</b><b class="z">0</b><b class="z">0</b><b class="z">0</b><b class="z">0</b><b class="z">0</b><b class="z">0</b><b class="z">0</b><b class="z">0</b><b class="z">0</b><b class="z">0</b></span><span class="m" style="left:1499.8px;top:679.5px;">x87TagWord</span><span class="m" style="left:1653.8px;top:679.5px;">FFFF</span><span class="m" style="left:1499.8px;top:703.5px;">x87TW_<b class="z">0</b></span><span class="m" style="left:1611.8px;top:703.5px;">3 (Empty)</span><span class="m" style="left:1779.8px;top:703.5px;">x87TW_1</span><span class="m" style="left:1891.8px;top:703.5px;">3 (Empty)</span><span class="m" style="left:1499.8px;top:727.5px;">x87TW_2</span><span class="m" style="left:1611.8px;top:727.5px;">3 (Empty)</span><span class="m" style="left:1779.8px;top:727.5px;">x87TW_3</span><span class="m" style="left:1891.8px;top:727.5px;">3 (Empty)</span><span class="m" style="left:1499.8px;top:751.5px;">x87TW_4</span><span class="m" style="left:1611.8px;top:751.5px;">3 (Empty)</span><span class="m" style="left:1779.8px;top:751.5px;">x87TW_5</span><span class="m" style="left:1891.8px;top:751.5px;">3 (Empty)</span><span class="m" style="left:1499.8px;top:775.5px;">x87TW_6</span><span class="m" style="left:1611.8px;top:775.5px;">3 (Empty)</span><span class="m" style="left:1779.8px;top:775.5px;">x87TW_7</span><span class="m" style="left:1891.8px;top:775.5px;">3 (Empty)</span><span class="m" style="left:1499.8px;top:823.5px;">x87StatusWord</span><span class="m" style="left:1695.8px;top:823.5px;"><b class="z">0</b><b class="z">0</b><b class="z">0</b><b class="z">0</b></span><span class="m" style="left:1499.8px;top:847.5px;">x87SW_B</span><span class="m" style="left:1625.8px;top:847.5px;"><b class="z">0</b></span><span class="m" style="left:1667.8px;top:847.5px;">x87SW_C3</span><span class="m" style="left:1807.8px;top:847.5px;"><b class="z">0</b></span><span class="m" style="left:1849.8px;top:847.5px;">x87SW_C2</span><span class="m" style="left:1989.8px;top:847.5px;"><b class="z">0</b></span><span class="m" style="left:1499.8px;top:871.5px;">x87SW_C1</span><span class="m" style="left:1625.8px;top:871.5px;"><b class="z">0</b></span><span class="m" style="left:1667.8px;top:871.5px;">x87SW_C<b class="z">0</b></span><span class="m" style="left:1807.8px;top:871.5px;"><b class="z">0</b></span><span class="m" style="left:1849.8px;top:871.5px;">x87SW_ES</span><span class="m" style="left:1989.8px;top:871.5px;"><b class="z">0</b></span><div style="left:1482px;top:895px;width:2358px;height:2px;background:#f0f0f0;"></div><div style="left:3820px;top:227px;width:19px;height:668px;background:#f7f7f7;border:2px solid #808080;border-right-width:1px"></div><div style="left:3824px;top:325px;width:12px;height:200px;background:#a9a9a9;"></div><div style="left:1484px;top:897px;width:2138px;height:38px;background:#e1e1e1;"></div><span class="s" style="left:1493.3px;top:905.0px;font-size:22.5px;line-height:29px;color:#000;transform:scaleX(0.9769);">Default (stdcall)</span><svg style="left:3601.5px;top:913px" width="7" height="5"><path d="M0 0H7V1.2H5L3.5 4.4L2 1.2H0Z" fill="#000"/></svg><div style="left:3628px;top:897px;width:70px;height:36px;background:#fff;border:1px solid #adadad;"></div><span class="s" style="left:3638.0px;top:904.7px;font-size:22.5px;line-height:29px;color:#000;transform:scaleX(0.8589);">12</span><div style="left:3665px;top:900px;width:30px;height:15px;background:#e9e9e9;border:1px solid #c4c4c4;"></div><div style="left:3665px;top:915px;width:30px;height:15px;background:#e9e9e9;border:1px solid #c4c4c4;"></div><svg style="left:3665px;top:900px" width="30" height="30"><path d="M9.5 10.5L15 4.5L20.5 10.5Z M9.5 19.5L15 25.5L20.5 19.5Z" fill="#000"/></svg><div style="left:3704px;top:903px;width:26px;height:26px;background:#fff;border:2px solid #333;"></div><span class="s" style="left:3742.5px;top:904.8px;font-size:22.5px;line-height:29px;color:#000;transform:scaleX(0.9221);">Unlocked</span><div style="left:1482px;top:935px;width:2358px;height:630px;background:#fff8f0;border:2px solid #000;"></div><div style="left:1484px;top:937px;width:2334px;height:22px;background:#c0c0c0;"></div><span class="m" style="left:1494.4px;top:936.9px;">1: [esp+4] <b class="z">0</b><b class="z">0</b><b class="z">0</b><b class="z">0</b><b class="z">0</b><b class="z">0</b><b class="z">0</b><b class="z">0</b></span><span class="m" style="left:1494.4px;top:958.9px;">2: [esp+8] <b class="z">0</b><b class="z">0</b>558A6C "Tony Hawk's Pro Skater 2"</span><span class="m" style="left:1494.4px;top:980.9px;">3: [esp+C] <b class="z">0</b><b class="z">0</b>558A6C "Tony Hawk's Pro Skater 2"</span><span class="m" style="left:1494.4px;top:1002.9px;">4: [esp+1<b class="z">0</b>] 1<b class="z">0</b>C<b class="z">0</b><b class="z">0</b><b class="z">0</b><b class="z">0</b><b class="z">0</b></span><span class="m" style="left:1494.4px;top:1024.9px;">5: [esp+14] <b class="z">0</b><b class="z">0</b><b class="z">0</b><b class="z">0</b><b class="z">0</b><b class="z">0</b><b class="z">0</b><b class="z">0</b></span><span class="m" style="left:1494.4px;top:1046.9px;">6: [esp+18] <b class="z">0</b><b class="z">0</b><b class="z">0</b><b class="z">0</b><b class="z">0</b><b class="z">0</b><b class="z">0</b><b class="z">0</b></span><span class="m" style="left:1494.4px;top:1068.9px;">7: [esp+1C] <b class="z">0</b><b class="z">0</b><b class="z">0</b><b class="z">0</b><b class="z">0</b>78<b class="z">0</b></span><span class="m" style="left:1494.4px;top:1090.9px;">8: [esp+2<b class="z">0</b>] <b class="z">0</b><b class="z">0</b><b class="z">0</b><b class="z">0</b><b class="z">0</b>438</span><span class="m" style="left:1494.4px;top:1112.9px;">9: [esp+24] <b class="z">0</b><b class="z">0</b><b class="z">0</b><b class="z">0</b><b class="z">0</b><b class="z">0</b><b class="z">0</b><b class="z">0</b></span><span class="m" style="left:1494.4px;top:1134.9px;">1<b class="z">0</b>: [esp+28] <b class="z">0</b><b class="z">0</b><b class="z">0</b><b class="z">0</b><b class="z">0</b><b class="z">0</b><b class="z">0</b><b class="z">0</b></span><span class="m" style="left:1494.4px;top:1156.9px;">11: [esp+2C] <b class="z">0</b><b class="z">0</b>4<b class="z">0</b><b class="z">0</b><b class="z">0</b><b class="z">0</b><b class="z">0</b> thawk2.<b class="z">0</b><b class="z">0</b>4<b class="z">0</b><b class="z">0</b><b class="z">0</b><b class="z">0</b><b class="z">0</b></span><span class="m" style="left:1494.4px;top:1178.9px;">12: [esp+3<b class="z">0</b>] <b class="z">0</b><b class="z">0</b><b class="z">0</b><b class="z">0</b><b class="z">0</b><b class="z">0</b><b class="z">0</b><b class="z">0</b></span><div style="left:3818px;top:937px;width:20px;height:626px;background:#f0f0f0;"></div><div style="left:3820px;top:939px;width:17px;height:622px;background:#a9a9a9;border:1px solid #e8e8e8"></div><div style="left:169px;top:1571px;width:1118px;height:1px;background:#d9d9d9;"></div><div style="left:0px;top:1567px;width:170px;height:48px;background:#fff;border:1px solid #d9d9d9;border-bottom:none"></div><svg style="left:24px;top:1574px" width="32" height="32" viewBox="0 0 32 32"><rect x="0" y="27" width="32" height="2.4" fill="#c8c8c8" opacity=".6"/><rect x="10" y="3.2" width="22" height="21.4" fill="#c4c6d2"/><rect x="12" y="3.2" width="4" height="21.4" fill="#e6e6ee"/><rect x="16" y="3.2" width="3" height="21.4" fill="#9a9cac"/><rect x="20" y="3.2" width="4" height="21.4" fill="#e2e2ea"/><rect x="24" y="3.2" width="2.6" height="21.4" fill="#a4a6b4"/><rect x="26.6" y="3.2" width="4" height="21.4" fill="#bcd0c4"/><rect x="10" y="3.2" width="22" height="4" fill="#e8e8ea" opacity=".75"/><rect x="10" y="21.6" width="22" height="3" fill="#7e7e88"/><rect x="0" y="7" width="10" height="17" fill="#f4b21e"/><rect x="0" y="7" width="10" height="2.4" fill="#fccc50"/><rect x="0" y="11" width="6" height="8.4" fill="#5a8ec6"/><rect x="1.6" y="12.4" width="2" height="5" fill="#9cc4e8"/><rect x="0" y="21" width="10" height="3" fill="#d8901c"/><circle cx="6.2" cy="25" r="4" fill="#3a2828"/><circle cx="6.2" cy="25" r="1.9" fill="#b0b0b0"/><circle cx="26.6" cy="25" r="4" fill="#3a2828"/><circle cx="26.6" cy="25" r="1.9" fill="#b0b0b0"/></svg><span class="s" style="left:67.4px;top:1579.9px;font-size:23px;line-height:30px;color:#000;transform:scaleX(0.9237);">Dump 1</span><div style="left:331px;top:1571px;width:1px;height:43px;background:#d9d9d9;"></div><svg style="left:190px;top:1576px" width="32" height="32" viewBox="0 0 32 32"><rect x="0" y="27" width="32" height="2.4" fill="#c8c8c8" opacity=".6"/><rect x="10" y="3.2" width="22" height="21.4" fill="#c4c6d2"/><rect x="12" y="3.2" width="4" height="21.4" fill="#e6e6ee"/><rect x="16" y="3.2" width="3" height="21.4" fill="#9a9cac"/><rect x="20" y="3.2" width="4" height="21.4" fill="#e2e2ea"/><rect x="24" y="3.2" width="2.6" height="21.4" fill="#a4a6b4"/><rect x="26.6" y="3.2" width="4" height="21.4" fill="#bcd0c4"/><rect x="10" y="3.2" width="22" height="4" fill="#e8e8ea" opacity=".75"/><rect x="10" y="21.6" width="22" height="3" fill="#7e7e88"/><rect x="0" y="7" width="10" height="17" fill="#f4b21e"/><rect x="0" y="7" width="10" height="2.4" fill="#fccc50"/><rect x="0" y="11" width="6" height="8.4" fill="#5a8ec6"/><rect x="1.6" y="12.4" width="2" height="5" fill="#9cc4e8"/><rect x="0" y="21" width="10" height="3" fill="#d8901c"/><circle cx="6.2" cy="25" r="4" fill="#3a2828"/><circle cx="6.2" cy="25" r="1.9" fill="#b0b0b0"/><circle cx="26.6" cy="25" r="4" fill="#3a2828"/><circle cx="26.6" cy="25" r="1.9" fill="#b0b0b0"/></svg><span class="s" style="left:233.0px;top:1581.3px;font-size:23px;line-height:30px;color:#000;transform:scaleX(0.9435);">Dump 2</span><div style="left:497px;top:1571px;width:1px;height:43px;background:#d9d9d9;"></div><svg style="left:356px;top:1576px" width="32" height="32" viewBox="0 0 32 32"><rect x="0" y="27" width="32" height="2.4" fill="#c8c8c8" opacity=".6"/><rect x="10" y="3.2" width="22" height="21.4" fill="#c4c6d2"/><rect x="12" y="3.2" width="4" height="21.4" fill="#e6e6ee"/><rect x="16" y="3.2" width="3" height="21.4" fill="#9a9cac"/><rect x="20" y="3.2" width="4" height="21.4" fill="#e2e2ea"/><rect x="24" y="3.2" width="2.6" height="21.4" fill="#a4a6b4"/><rect x="26.6" y="3.2" width="4" height="21.4" fill="#bcd0c4"/><rect x="10" y="3.2" width="22" height="4" fill="#e8e8ea" opacity=".75"/><rect x="10" y="21.6" width="22" height="3" fill="#7e7e88"/><rect x="0" y="7" width="10" height="17" fill="#f4b21e"/><rect x="0" y="7" width="10" height="2.4" fill="#fccc50"/><rect x="0" y="11" width="6" height="8.4" fill="#5a8ec6"/><rect x="1.6" y="12.4" width="2" height="5" fill="#9cc4e8"/><rect x="0" y="21" width="10" height="3" fill="#d8901c"/><circle cx="6.2" cy="25" r="4" fill="#3a2828"/><circle cx="6.2" cy="25" r="1.9" fill="#b0b0b0"/><circle cx="26.6" cy="25" r="4" fill="#3a2828"/><circle cx="26.6" cy="25" r="1.9" fill="#b0b0b0"/></svg><span class="s" style="left:399.0px;top:1581.3px;font-size:23px;line-height:30px;color:#000;transform:scaleX(0.9336);">Dump 3</span><div style="left:663px;top:1571px;width:1px;height:43px;background:#d9d9d9;"></div><svg style="left:522px;top:1576px" width="32" height="32" viewBox="0 0 32 32"><rect x="0" y="27" width="32" height="2.4" fill="#c8c8c8" opacity=".6"/><rect x="10" y="3.2" width="22" height="21.4" fill="#c4c6d2"/><rect x="12" y="3.2" width="4" height="21.4" fill="#e6e6ee"/><rect x="16" y="3.2" width="3" height="21.4" fill="#9a9cac"/><rect x="20" y="3.2" width="4" height="21.4" fill="#e2e2ea"/><rect x="24" y="3.2" width="2.6" height="21.4" fill="#a4a6b4"/><rect x="26.6" y="3.2" width="4" height="21.4" fill="#bcd0c4"/><rect x="10" y="3.2" width="22" height="4" fill="#e8e8ea" opacity=".75"/><rect x="10" y="21.6" width="22" height="3" fill="#7e7e88"/><rect x="0" y="7" width="10" height="17" fill="#f4b21e"/><rect x="0" y="7" width="10" height="2.4" fill="#fccc50"/><rect x="0" y="11" width="6" height="8.4" fill="#5a8ec6"/><rect x="1.6" y="12.4" width="2" height="5" fill="#9cc4e8"/><rect x="0" y="21" width="10" height="3" fill="#d8901c"/><circle cx="6.2" cy="25" r="4" fill="#3a2828"/><circle cx="6.2" cy="25" r="1.9" fill="#b0b0b0"/><circle cx="26.6" cy="25" r="4" fill="#3a2828"/><circle cx="26.6" cy="25" r="1.9" fill="#b0b0b0"/></svg><span class="s" style="left:565.2px;top:1581.3px;font-size:23px;line-height:30px;color:#000;transform:scaleX(0.9448);">Dump 4</span><div style="left:829px;top:1571px;width:1px;height:43px;background:#d9d9d9;"></div><svg style="left:688px;top:1576px" width="32" height="32" viewBox="0 0 32 32"><rect x="0" y="27" width="32" height="2.4" fill="#c8c8c8" opacity=".6"/><rect x="10" y="3.2" width="22" height="21.4" fill="#c4c6d2"/><rect x="12" y="3.2" width="4" height="21.4" fill="#e6e6ee"/><rect x="16" y="3.2" width="3" height="21.4" fill="#9a9cac"/><rect x="20" y="3.2" width="4" height="21.4" fill="#e2e2ea"/><rect x="24" y="3.2" width="2.6" height="21.4" fill="#a4a6b4"/><rect x="26.6" y="3.2" width="4" height="21.4" fill="#bcd0c4"/><rect x="10" y="3.2" width="22" height="4" fill="#e8e8ea" opacity=".75"/><rect x="10" y="21.6" width="22" height="3" fill="#7e7e88"/><rect x="0" y="7" width="10" height="17" fill="#f4b21e"/><rect x="0" y="7" width="10" height="2.4" fill="#fccc50"/><rect x="0" y="11" width="6" height="8.4" fill="#5a8ec6"/><rect x="1.6" y="12.4" width="2" height="5" fill="#9cc4e8"/><rect x="0" y="21" width="10" height="3" fill="#d8901c"/><circle cx="6.2" cy="25" r="4" fill="#3a2828"/><circle cx="6.2" cy="25" r="1.9" fill="#b0b0b0"/><circle cx="26.6" cy="25" r="4" fill="#3a2828"/><circle cx="26.6" cy="25" r="1.9" fill="#b0b0b0"/></svg><span class="s" style="left:731.8px;top:1581.3px;font-size:23px;line-height:30px;color:#000;transform:scaleX(0.9299);">Dump 5</span><div style="left:997px;top:1571px;width:1px;height:43px;background:#d9d9d9;"></div><svg style="left:853px;top:1576px" width="32" height="32" viewBox="0 0 32 32"><rect x="3" y="29.6" width="26" height="1.6" fill="#c8c8c8" opacity=".6"/><path d="M2.4 12L4.6 1.4L11.4 5.6ZM28.8 12L26.6 1.4L19.8 5.6Z" fill="#c08038" stroke="#8a5a20" stroke-width="1"/><ellipse cx="15.6" cy="16.6" rx="14.6" ry="12.8" fill="#cc8c44"/><ellipse cx="15.6" cy="12" rx="9" ry="6" fill="#dca058"/><ellipse cx="15.6" cy="22" rx="7.6" ry="6.4" fill="#f2d6a6"/><rect x="8.6" y="14" width="3" height="4" fill="#2a1a10"/><rect x="19.6" y="14" width="3" height="4" fill="#2a1a10"/><path d="M12.6 20H18.6L15.6 24Z" fill="#2a1a10"/><rect x="14.4" y="25" width="2.4" height="2.6" fill="#e86a6a"/></svg><span class="s" style="left:896.0px;top:1581.3px;font-size:23px;line-height:30px;color:#000;transform:scaleX(0.9387);">Watch 1</span><div style="left:1145px;top:1571px;width:1px;height:43px;background:#d9d9d9;"></div><svg style="left:1021px;top:1576px" width="32" height="32" viewBox="0 0 32 32"><path d="M3.6 8.6H0.8V26.4H3.6M29.6 8.6H32.4V26.4H29.6" fill="none" stroke="#555" stroke-width="1.8"/><text x="4.6" y="23.6" font-family="Liberation Serif" font-style="italic" font-weight="700" font-size="22" fill="#803434" textLength="11.6" lengthAdjust="spacingAndGlyphs">x</text><rect x="18.4" y="15" width="9.6" height="2.4" fill="#666"/><rect x="18.4" y="20" width="9.6" height="2.4" fill="#666"/></svg><span class="s" style="left:1064.7px;top:1581.3px;font-size:23px;line-height:30px;color:#000;transform:scaleX(0.8874);">Locals</span><div style="left:1287px;top:1571px;width:1px;height:43px;background:#d9d9d9;"></div><svg style="left:1170px;top:1576px" width="32" height="32" viewBox="0 0 32 32"><rect x="2" y="29.6" width="22" height="1.8" fill="#c8c8c8" opacity=".6"/><path d="M6.6 28.6L23.6 11.4Q28.6 5.6 23.4 2.8Q17.4 0.6 12.6 4.6Q10 7.4 10.8 10.6" fill="none" stroke="#d88c8c" stroke-width="6.4" stroke-linecap="round"/><path d="M6.6 28.6L23.6 11.4Q28.6 5.6 23.4 2.8Q17.4 0.6 12.6 4.6Q10 7.4 10.8 10.6" fill="none" stroke="#fbfbfb" stroke-width="5" stroke-linecap="round"/><path d="M6.6 28.6L23.6 11.4Q28.6 5.6 23.4 2.8Q17.4 0.6 12.6 4.6Q10 7.4 10.8 10.6" fill="none" stroke="#e22c2c" stroke-width="5" stroke-dasharray="3 3.4" stroke-linecap="butt"/></svg><span class="s" style="left:1212.0px;top:1581.3px;font-size:23px;line-height:30px;color:#000;transform:scaleX(0.9604);">Struct</span><div style="left:0px;top:1615px;width:1650px;height:373px;background:#fff8f0;border:1px solid #828790;border-top-width:2px"></div><div style="left:2px;top:1617px;width:94px;height:30px;background:#c0c0c0;border-right:3px solid #808080;border-bottom:4px solid #808080;border-top:1px solid #d8d8d8;border-left:1px solid #d8d8d8;overflow:hidden"><span class="m" style="left:9.0px;top:2.4px;">Addres</span></div><div style="left:98px;top:1617px;width:486px;height:30px;background:#c0c0c0;border-right:3px solid #808080;border-bottom:4px solid #808080;border-top:1px solid #d8d8d8;border-left:1px solid #d8d8d8;overflow:hidden"><span class="m" style="left:8.5px;top:2.4px;">Hex</span></div><div style="left:584px;top:1617px;width:176px;height:30px;background:#c0c0c0;border-right:3px solid #808080;border-bottom:4px solid #808080;border-top:1px solid #d8d8d8;border-left:1px solid #d8d8d8;overflow:hidden"><span class="m" style="left:7.8px;top:2.4px;">ASCII</span></div><div style="left:761px;top:1617px;width:853px;height:30px;background:#c0c0c0;border-right:0px solid #808080;border-bottom:4px solid #808080;border-top:1px solid #d8d8d8;border-left:1px solid #d8d8d8;overflow:hidden"></div><div style="left:0;top:0;width:1614px;height:1953px;overflow:hidden"><div class="r" style="top:1647px"><div class="c" style="left:2px;width:93px;text-indent:10.3px">77411<b class="z">0</b><b class="z">0</b><b class="z">0</b></div><div class="c" style="left:98px;width:482px"><div class="sel" style="left:0;top:0;width:42px;height:22px"></div><div style="left:176px;top:18.5px;width:154px;height:3px;background:#ff0000"></div><div style="left:8px;top:0;height:22px;width:600px"><i class="w3">16 </i><i class="w3 gr"><b class="z">0</b><b class="z">0</b> </i><i class="w3">18 </i><i class="w3 gr"><b class="z">0</b><b class="z">0</b> </i><i class="w3">C<b class="z">0</b> </i><i class="w3">8B </i><i class="w3 pu">41 </i><i class="w3 pu">77 </i><i class="w3">14 </i><i class="w3 gr"><b class="z">0</b><b class="z">0</b> </i><i class="w3">16 </i><i class="w3 gr"><b class="z">0</b><b class="z">0</b> </i></div></div><div class="c" style="left:592px;width:166px"><div class="sel" style="left:0;top:0;width:14px;height:22px"></div><div style="left:0;top:0;height:22px;width:400px"><i class="w1">.</i><i class="w1 gr">.</i><i class="w1">.</i><i class="w1 gr">.</i><i class="w1">À</i><i class="w1">.</i><i class="w1 pu">A</i><i class="w1 pu">w</i><i class="w1">.</i><i class="w1 gr">.</i><i class="w1">.</i><i class="w1 gr">.</i></div></div></div><div class="r" style="top:1669px"><div class="c" style="left:2px;width:93px;text-indent:10.3px">77411<b class="z">0</b>1<b class="z">0</b></div><div class="c" style="left:98px;width:482px"><div style="left:8px;top:18.5px;width:154px;height:3px;background:#000080"></div><div style="left:176px;top:18.5px;width:154px;height:3px;background:#ff0000"></div><div style="left:8px;top:0;height:22px;width:600px"><i class="w3 gr"><b class="z">0</b><b class="z">0</b> </i><i class="w3 gr"><b class="z">0</b><b class="z">0</b> </i><i class="w3"><b class="z">0</b>2 </i><i class="w3 gr"><b class="z">0</b><b class="z">0</b> </i><i class="w3">8<b class="z">0</b> </i><i class="w3 pu">5B </i><i class="w3 pu">41 </i><i class="w3 pu">77 </i><i class="w3"><b class="z">0</b>E </i><i class="w3 gr"><b class="z">0</b><b class="z">0</b> </i><i class="w3">1<b class="z">0</b> </i><i class="w3 gr"><b class="z">0</b><b class="z">0</b> </i></div></div><div class="c" style="left:592px;width:166px"><div style="left:0;top:0;height:22px;width:400px"><i class="w1 gr">.</i><i class="w1 gr">.</i><i class="w1">.</i><i class="w1 gr">.</i><i class="w1">.</i><i class="w1 pu"><b class="bi bo">[</b></i><i class="w1 pu">A</i><i class="w1 pu">w</i><i class="w1">.</i><i class="w1 gr">.</i><i class="w1">.</i><i class="w1 gr">.</i></div></div></div><div class="r" style="top:1691px"><div class="c" style="left:2px;width:93px;text-indent:10.3px">77411<b class="z">0</b>2<b class="z">0</b></div><div class="c" style="left:98px;width:482px"><div style="left:176px;top:18.5px;width:154px;height:3px;background:#ff0000"></div><div style="left:8px;top:0;height:22px;width:600px"><i class="w3 pu"><b class="z">0</b>C </i><i class="w3 gr"><b class="z">0</b><b class="z">0</b> </i><i class="w3"><b class="z">0</b>E </i><i class="w3 gr"><b class="z">0</b><b class="z">0</b> </i><i class="w3">D<b class="z">0</b> </i><i class="w3">8D </i><i class="w3 pu">41 </i><i class="w3 pu">77 </i><i class="w3"><b class="z">0</b>6 </i><i class="w3 gr"><b class="z">0</b><b class="z">0</b> </i><i class="w3"><b class="z">0</b>8 </i><i class="w3 gr"><b class="z">0</b><b class="z">0</b> </i></div></div><div class="c" style="left:592px;width:166px"><div style="left:0;top:0;height:22px;width:400px"><i class="w1 pu">.</i><i class="w1 gr">.</i><i class="w1">.</i><i class="w1 gr">.</i><i class="w1">Ð</i><i class="w1">.</i><i class="w1 pu">A</i><i class="w1 pu">w</i><i class="w1">.</i><i class="w1 gr">.</i><i class="w1">.</i><i class="w1 gr">.</i></div></div></div><div class="r" style="top:1713px"><div class="c" style="left:2px;width:93px;text-indent:10.3px">77411<b class="z">0</b>3<b class="z">0</b></div><div class="c" style="left:98px;width:482px"><div style="left:176px;top:18.5px;width:154px;height:3px;background:#ff0000"></div><div style="left:8px;top:0;height:22px;width:600px"><i class="w3"><b class="z">0</b>6 </i><i class="w3 gr"><b class="z">0</b><b class="z">0</b> </i><i class="w3"><b class="z">0</b>8 </i><i class="w3 gr"><b class="z">0</b><b class="z">0</b> </i><i class="w3">C<b class="z">0</b> </i><i class="w3">8D </i><i class="w3 pu">41 </i><i class="w3 pu">77 </i><i class="w3"><b class="z">0</b>6 </i><i class="w3 gr"><b class="z">0</b><b class="z">0</b> </i><i class="w3"><b class="z">0</b>8 </i><i class="w3 gr"><b class="z">0</b><b class="z">0</b> </i></div></div><div class="c" style="left:592px;width:166px"><div style="left:0;top:0;height:22px;width:400px"><i class="w1">.</i><i class="w1 gr">.</i><i class="w1">.</i><i class="w1 gr">.</i><i class="w1">À</i><i class="w1">.</i><i class="w1 pu">A</i><i class="w1 pu">w</i><i class="w1">.</i><i class="w1 gr">.</i><i class="w1">.</i><i class="w1 gr">.</i></div></div></div><div class="r" style="top:1735px"><div class="c" style="left:2px;width:93px;text-indent:10.3px">77411<b class="z">0</b>4<b class="z">0</b></div><div class="c" style="left:98px;width:482px"><div style="left:176px;top:18.5px;width:154px;height:3px;background:#ff0000"></div><div style="left:8px;top:0;height:22px;width:600px"><i class="w3"><b class="z">0</b>6 </i><i class="w3 gr"><b class="z">0</b><b class="z">0</b> </i><i class="w3"><b class="z">0</b>8 </i><i class="w3 gr"><b class="z">0</b><b class="z">0</b> </i><i class="w3">C8 </i><i class="w3">8D </i><i class="w3 pu">41 </i><i class="w3 pu">77 </i><i class="w3"><b class="z">0</b>8 </i><i class="w3 gr"><b class="z">0</b><b class="z">0</b> </i><i class="w3 pu"><b class="z">0</b>A </i><i class="w3 gr"><b class="z">0</b><b class="z">0</b> </i></div></div><div class="c" style="left:592px;width:166px"><div style="left:0;top:0;height:22px;width:400px"><i class="w1">.</i><i class="w1 gr">.</i><i class="w1">.</i><i class="w1 gr">.</i><i class="w1">È</i><i class="w1">.</i><i class="w1 pu">A</i><i class="w1 pu">w</i><i class="w1">.</i><i class="w1 gr">.</i><i class="w1 pu">.</i><i class="w1 gr">.</i></div></div></div><div class="r" style="top:1757px"><div class="c" style="left:2px;width:93px;text-indent:10.3px">77411<b class="z">0</b>5<b class="z">0</b></div><div class="c" style="left:98px;width:482px"><div style="left:176px;top:18.5px;width:154px;height:3px;background:#ff0000"></div><div style="left:8px;top:0;height:22px;width:600px"><i class="w3">1C </i><i class="w3 gr"><b class="z">0</b><b class="z">0</b> </i><i class="w3">1E </i><i class="w3 gr"><b class="z">0</b><b class="z">0</b> </i><i class="w3 pu">6C </i><i class="w3">84 </i><i class="w3 pu">41 </i><i class="w3 pu">77 </i><i class="w3 pu">2A </i><i class="w3 gr"><b class="z">0</b><b class="z">0</b> </i><i class="w3 pu">2C </i><i class="w3 gr"><b class="z">0</b><b class="z">0</b> </i></div></div><div class="c" style="left:592px;width:166px"><div style="left:0;top:0;height:22px;width:400px"><i class="w1">.</i><i class="w1 gr">.</i><i class="w1">.</i><i class="w1 gr">.</i><i class="w1 pu">l</i><i class="w1">.</i><i class="w1 pu">A</i><i class="w1 pu">w</i><i class="w1 pu">*</i><i class="w1 gr">.</i><i class="w1 pu">,</i><i class="w1 gr">.</i></div></div></div><div class="r" style="top:1779px"><div class="c" style="left:2px;width:93px;text-indent:10.3px">77411<b class="z">0</b>6<b class="z">0</b></div><div class="c" style="left:98px;width:482px"><div style="left:176px;top:18.5px;width:154px;height:3px;background:#ff0000"></div><div style="left:344px;top:18.5px;width:154px;height:3px;background:#000080"></div><div style="left:8px;top:0;height:22px;width:600px"><i class="w3"><b class="z">0</b>8 </i><i class="w3 gr"><b class="z">0</b><b class="z">0</b> </i><i class="w3 pu"><b class="z">0</b>A </i><i class="w3 gr"><b class="z">0</b><b class="z">0</b> </i><i class="w3">D8 </i><i class="w3">8B </i><i class="w3 pu">41 </i><i class="w3 pu">77 </i><i class="w3"><b class="z">0</b>2 </i><i class="w3 gr"><b class="z">0</b><b class="z">0</b> </i><i class="w3"><b class="z">0</b>4 </i><i class="w3 gr"><b class="z">0</b><b class="z">0</b> </i></div></div><div class="c" style="left:592px;width:166px"><div style="left:0;top:0;height:22px;width:400px"><i class="w1">.</i><i class="w1 gr">.</i><i class="w1 pu">.</i><i class="w1 gr">.</i><i class="w1">Ø</i><i class="w1">.</i><i class="w1 pu">A</i><i class="w1 pu">w</i><i class="w1">.</i><i class="w1 gr">.</i><i class="w1">.</i><i class="w1 gr">.</i></div></div></div><div class="r" style="top:1801px"><div class="c" style="left:2px;width:93px;text-indent:10.3px">77411<b class="z">0</b>7<b class="z">0</b></div><div class="c" style="left:98px;width:482px"><div style="left:176px;top:18.5px;width:154px;height:3px;background:#ff0000"></div><div style="left:344px;top:18.5px;width:154px;height:3px;background:#000080"></div><div style="left:8px;top:0;height:22px;width:600px"><i class="w3"><b class="z">0</b>8 </i><i class="w3 gr"><b class="z">0</b><b class="z">0</b> </i><i class="w3 pu"><b class="z">0</b>A </i><i class="w3 gr"><b class="z">0</b><b class="z">0</b> </i><i class="w3">A4 </i><i class="w3">D7 </i><i class="w3 pu">41 </i><i class="w3 pu">77 </i><i class="w3">18 </i><i class="w3 gr"><b class="z">0</b><b class="z">0</b> </i><i class="w3">1A </i><i class="w3 gr"><b class="z">0</b><b class="z">0</b> </i></div></div><div class="c" style="left:592px;width:166px"><div style="left:0;top:0;height:22px;width:400px"><i class="w1">.</i><i class="w1 gr">.</i><i class="w1 pu">.</i><i class="w1 gr">.</i><i class="w1">¤</i><i class="w1">×</i><i class="w1 pu">A</i><i class="w1 pu">w</i><i class="w1">.</i><i class="w1 gr">.</i><i class="w1">.</i><i class="w1 gr">.</i></div></div></div><div class="r" style="top:1823px"><div class="c" style="left:2px;width:93px;text-indent:10.3px">77411<b class="z">0</b>8<b class="z">0</b></div><div class="c" style="left:98px;width:482px"><div style="left:176px;top:18.5px;width:154px;height:3px;background:#ff0000"></div><div style="left:8px;top:0;height:22px;width:600px"><i class="w3">1C </i><i class="w3 gr"><b class="z">0</b><b class="z">0</b> </i><i class="w3">1E </i><i class="w3 gr"><b class="z">0</b><b class="z">0</b> </i><i class="w3 pu">7<b class="z">0</b> </i><i class="w3">D9 </i><i class="w3 pu">41 </i><i class="w3 pu">77 </i><i class="w3 pu">28 </i><i class="w3 gr"><b class="z">0</b><b class="z">0</b> </i><i class="w3 pu">2A </i><i class="w3 gr"><b class="z">0</b><b class="z">0</b> </i></div></div><div class="c" style="left:592px;width:166px"><div style="left:0;top:0;height:22px;width:400px"><i class="w1">.</i><i class="w1 gr">.</i><i class="w1">.</i><i class="w1 gr">.</i><i class="w1 pu">p</i><i class="w1">Ù</i><i class="w1 pu">A</i><i class="w1 pu">w</i><i class="w1 pu">(</i><i class="w1 gr">.</i><i class="w1 pu">*</i><i class="w1 gr">.</i></div></div></div><div class="r" style="top:1845px"><div class="c" style="left:2px;width:93px;text-indent:10.3px">77411<b class="z">0</b>9<b class="z">0</b></div><div class="c" style="left:98px;width:482px"><div style="left:176px;top:18.5px;width:154px;height:3px;background:#ff0000"></div><div style="left:8px;top:0;height:22px;width:600px"><i class="w3 pu">34 </i><i class="w3 gr"><b class="z">0</b><b class="z">0</b> </i><i class="w3 pu">36 </i><i class="w3 gr"><b class="z">0</b><b class="z">0</b> </i><i class="w3 pu"><b class="z">0</b>C </i><i class="w3">D9 </i><i class="w3 pu">41 </i><i class="w3 pu">77 </i><i class="w3">1E </i><i class="w3 gr"><b class="z">0</b><b class="z">0</b> </i><i class="w3 pu">2<b class="z">0</b> </i><i class="w3 gr"><b class="z">0</b><b class="z">0</b> </i></div></div><div class="c" style="left:592px;width:166px"><div style="left:0;top:0;height:22px;width:400px"><i class="w1 pu">4</i><i class="w1 gr">.</i><i class="w1 pu">6</i><i class="w1 gr">.</i><i class="w1 pu">.</i><i class="w1">Ù</i><i class="w1 pu">A</i><i class="w1 pu">w</i><i class="w1">.</i><i class="w1 gr">.</i><i class="w1 pu"> </i><i class="w1 gr">.</i></div></div></div><div class="r" style="top:1867px"><div class="c" style="left:2px;width:93px;text-indent:10.3px">77411<b class="z">0</b>A<b class="z">0</b></div><div class="c" style="left:98px;width:482px"><div style="left:176px;top:18.5px;width:154px;height:3px;background:#ff0000"></div><div style="left:344px;top:18.5px;width:154px;height:3px;background:#000080"></div><div style="left:8px;top:0;height:22px;width:600px"><i class="w3">1A </i><i class="w3 gr"><b class="z">0</b><b class="z">0</b> </i><i class="w3">1C </i><i class="w3 gr"><b class="z">0</b><b class="z">0</b> </i><i class="w3">D<b class="z">0</b> </i><i class="w3">D8 </i><i class="w3 pu">41 </i><i class="w3 pu">77 </i><i class="w3">18 </i><i class="w3 gr"><b class="z">0</b><b class="z">0</b> </i><i class="w3">1A </i><i class="w3 gr"><b class="z">0</b><b class="z">0</b> </i></div></div><div class="c" style="left:592px;width:166px"><div style="left:0;top:0;height:22px;width:400px"><i class="w1">.</i><i class="w1 gr">.</i><i class="w1">.</i><i class="w1 gr">.</i><i class="w1">Ð</i><i class="w1">Ø</i><i class="w1 pu">A</i><i class="w1 pu">w</i><i class="w1">.</i><i class="w1 gr">.</i><i class="w1">.</i><i class="w1 gr">.</i></div></div></div><div class="r" style="top:1889px"><div class="c" style="left:2px;width:93px;text-indent:10.3px">77411<b class="z">0</b>B<b class="z">0</b></div><div class="c" style="left:98px;width:482px"><div style="left:176px;top:18.5px;width:154px;height:3px;background:#ff0000"></div><div style="left:8px;top:0;height:22px;width:600px"><i class="w3 pu">2<b class="z">0</b> </i><i class="w3 gr"><b class="z">0</b><b class="z">0</b> </i><i class="w3 pu">22 </i><i class="w3 gr"><b class="z">0</b><b class="z">0</b> </i><i class="w3">9<b class="z">0</b> </i><i class="w3">D8 </i><i class="w3 pu">41 </i><i class="w3 pu">77 </i><i class="w3 pu">3<b class="z">0</b> </i><i class="w3 gr"><b class="z">0</b><b class="z">0</b> </i><i class="w3 pu">32 </i><i class="w3 gr"><b class="z">0</b><b class="z">0</b> </i></div></div><div class="c" style="left:592px;width:166px"><div style="left:0;top:0;height:22px;width:400px"><i class="w1 pu"> </i><i class="w1 gr">.</i><i class="w1 pu">"</i><i class="w1 gr">.</i><i class="w1">.</i><i class="w1">Ø</i><i class="w1 pu">A</i><i class="w1 pu">w</i><i class="w1 pu"><b class="z">0</b></i><i class="w1 gr">.</i><i class="w1 pu">2</i><i class="w1 gr">.</i></div></div></div><div class="r" style="top:1911px"><div class="c" style="left:2px;width:93px;text-indent:10.3px">77411<b class="z">0</b>C<b class="z">0</b></div><div class="c" style="left:98px;width:482px"><div style="left:176px;top:18.5px;width:154px;height:3px;background:#ff0000"></div><div style="left:8px;top:0;height:22px;width:600px"><i class="w3 pu">2C </i><i class="w3 gr"><b class="z">0</b><b class="z">0</b> </i><i class="w3 pu">2E </i><i class="w3 gr"><b class="z">0</b><b class="z">0</b> </i><i class="w3 pu">2C </i><i class="w3">D8 </i><i class="w3 pu">41 </i><i class="w3 pu">77 </i><i class="w3 pu">2<b class="z">0</b> </i><i class="w3 gr"><b class="z">0</b><b class="z">0</b> </i><i class="w3 pu">22 </i><i class="w3 gr"><b class="z">0</b><b class="z">0</b> </i></div></div><div class="c" style="left:592px;width:166px"><div style="left:0;top:0;height:22px;width:400px"><i class="w1 pu">,</i><i class="w1 gr">.</i><i class="w1 pu">.</i><i class="w1 gr">.</i><i class="w1 pu">,</i><i class="w1">Ø</i><i class="w1 pu">A</i><i class="w1 pu">w</i><i class="w1 pu"> </i><i class="w1 gr">.</i><i class="w1 pu">"</i><i class="w1 gr">.</i></div></div></div><div class="r" style="top:1933px"><div class="c" style="left:2px;width:93px;text-indent:10.3px">77411<b class="z">0</b>D<b class="z">0</b></div><div class="c" style="left:98px;width:482px"><div style="left:8px;top:18.5px;width:154px;height:3px;background:#000080"></div><div style="left:176px;top:18.5px;width:154px;height:3px;background:#ff0000"></div><div style="left:8px;top:0;height:22px;width:600px"><i class="w3">18 </i><i class="w3 gr"><b class="z">0</b><b class="z">0</b> </i><i class="w3">1A </i><i class="w3 gr"><b class="z">0</b><b class="z">0</b> </i><i class="w3">EC </i><i class="w3">D7 </i><i class="w3 pu">41 </i><i class="w3 pu">77 </i><i class="w3">1<b class="z">0</b> </i><i class="w3 gr"><b class="z">0</b><b class="z">0</b> </i><i class="w3">12 </i><i class="w3 gr"><b class="z">0</b><b class="z">0</b> </i></div></div><div class="c" style="left:592px;width:166px"><div style="left:0;top:0;height:22px;width:400px"><i class="w1">.</i><i class="w1 gr">.</i><i class="w1">.</i><i class="w1 gr">.</i><i class="w1">ì</i><i class="w1">×</i><i class="w1 pu">A</i><i class="w1 pu">w</i><i class="w1">.</i><i class="w1 gr">.</i><i class="w1">.</i><i class="w1 gr">.</i></div></div></div></div><div style="left:96px;top:1647px;width:2px;height:306px;background:#808080;"></div><div style="left:266px;top:1647px;width:2px;height:306px;background:#808080;"></div><div style="left:434px;top:1647px;width:2px;height:306px;background:#808080;"></div><div style="left:580px;top:1647px;width:2px;height:306px;background:#808080;"></div><div style="left:757px;top:1647px;width:2px;height:306px;background:#808080;"></div><div style="left:601.5px;top:1669px;width:1.5px;height:284px;background:#606060;"></div><div style="left:1614px;top:1618px;width:34px;height:335px;background:#f0f0f0;"></div><div style="left:1614px;top:1651px;width:34px;height:36px;background:#cdcdcd;"></div><svg style="left:1614px;top:1618px" width="34" height="335" fill="none" stroke="#606060" stroke-width="2.6"><path d="M12.0 21.3L17.0 16L22.0 21.3"/><path d="M12.0 313.7L17.0 319L22.0 313.7"/></svg><div style="left:2px;top:1953px;width:1612px;height:33px;background:#f0f0f0;"></div><div style="left:36px;top:1953px;width:1016px;height:33px;background:#cdcdcd;"></div><svg style="left:2px;top:1953px" width="1612" height="33" fill="none" stroke="#606060" stroke-width="2.6"><path d="M20.3 11.5L15 16.5L20.3 21.5"/><path d="M1591.7 11.5L1597 16.5L1591.7 21.5"/></svg><div style="left:1614px;top:1953px;width:34px;height:33px;background:#f0f0f0;"></div><div style="left:1652px;top:1567px;width:2188px;height:421px;background:#fff8f0;border:1px solid #828790;border-top-width:2px"></div><div style="left:0;top:0;width:3805px;height:1953px;overflow:hidden"><div class="r" style="top:1569px"><div class="c" style="left:1654px;width:196px;background:#000;color:#fff;text-indent:9.2px"><b class="z">0</b><b class="z">0</b>19FE54</div><div class="c sel" style="left:1852px;width:1953px"></div><div class="c" style="left:1852px;width:248px;text-indent:9.2px"><b class="z">0</b><b class="z">0</b>4F5<b class="z">0</b>2<b class="z">0</b></div><div class="c" style="left:2104px;width:1700px;text-indent:9.2px;color:#f00">return to thawk2.<b class="z">0</b><b class="z">0</b>4F5<b class="z">0</b>2<b class="z">0</b> from ???</div></div><div class="r" style="top:1591px"><div class="c g" style="left:1654px;width:196px;text-indent:9.2px"><b class="z">0</b><b class="z">0</b>19FE58</div><div class="c" style="left:1852px;width:248px;text-indent:9.2px"><b class="z">0</b><b class="z">0</b><b class="z">0</b><b class="z">0</b><b class="z">0</b><b class="z">0</b><b class="z">0</b><b class="z">0</b></div></div><div class="r" style="top:1613px"><div class="c g" style="left:1654px;width:196px;text-indent:9.2px"><b class="z">0</b><b class="z">0</b>19FE5C</div><div class="c" style="left:1852px;width:248px;text-indent:9.2px"><b class="z">0</b><b class="z">0</b>558A6C</div><div class="c" style="left:2104px;width:1700px;text-indent:9.2px">"Tony Hawk's Pro Skater 2"</div></div><div class="r" style="top:1635px"><div class="c g" style="left:1654px;width:196px;text-indent:9.2px"><b class="z">0</b><b class="z">0</b>19FE6<b class="z">0</b></div><div class="c" style="left:1852px;width:248px;text-indent:9.2px"><b class="z">0</b><b class="z">0</b>558A6C</div><div class="c" style="left:2104px;width:1700px;text-indent:9.2px">"Tony Hawk's Pro Skater 2"</div></div><div class="r" style="top:1657px"><div class="c g" style="left:1654px;width:196px;text-indent:9.2px"><b class="z">0</b><b class="z">0</b>19FE64</div><div class="c" style="left:1852px;width:248px;text-indent:9.2px">1<b class="z">0</b>C<b class="z">0</b><b class="z">0</b><b class="z">0</b><b class="z">0</b><b class="z">0</b></div></div><div class="r" style="top:1679px"><div class="c g" style="left:1654px;width:196px;text-indent:9.2px"><b class="z">0</b><b class="z">0</b>19FE68</div><div class="c" style="left:1852px;width:248px;text-indent:9.2px"><b class="z">0</b><b class="z">0</b><b class="z">0</b><b class="z">0</b><b class="z">0</b><b class="z">0</b><b class="z">0</b><b class="z">0</b></div></div><div class="r" style="top:1701px"><div class="c g" style="left:1654px;width:196px;text-indent:9.2px"><b class="z">0</b><b class="z">0</b>19FE6C</div><div class="c" style="left:1852px;width:248px;text-indent:9.2px"><b class="z">0</b><b class="z">0</b><b class="z">0</b><b class="z">0</b><b class="z">0</b><b class="z">0</b><b class="z">0</b><b class="z">0</b></div></div><div class="r" style="top:1723px"><div class="c g" style="left:1654px;width:196px;text-indent:9.2px"><b class="z">0</b><b class="z">0</b>19FE7<b class="z">0</b></div><div class="c" style="left:1852px;width:248px;text-indent:9.2px"><b class="z">0</b><b class="z">0</b><b class="z">0</b><b class="z">0</b><b class="z">0</b>78<b class="z">0</b></div></div><div class="r" style="top:1745px"><div class="c g" style="left:1654px;width:196px;text-indent:9.2px"><b class="z">0</b><b class="z">0</b>19FE74</div><div class="c" style="left:1852px;width:248px;text-indent:9.2px"><b class="z">0</b><b class="z">0</b><b class="z">0</b><b class="z">0</b><b class="z">0</b>438</div></div><div class="r" style="top:1767px"><div class="c g" style="left:1654px;width:196px;text-indent:9.2px"><b class="z">0</b><b class="z">0</b>19FE78</div><div class="c" style="left:1852px;width:248px;text-indent:9.2px"><b class="z">0</b><b class="z">0</b><b class="z">0</b><b class="z">0</b><b class="z">0</b><b class="z">0</b><b class="z">0</b><b class="z">0</b></div></div><div class="r" style="top:1789px"><div class="c g" style="left:1654px;width:196px;text-indent:9.2px"><b class="z">0</b><b class="z">0</b>19FE7C</div><div class="c" style="left:1852px;width:248px;text-indent:9.2px"><b class="z">0</b><b class="z">0</b><b class="z">0</b><b class="z">0</b><b class="z">0</b><b class="z">0</b><b class="z">0</b><b class="z">0</b></div></div><div class="r" style="top:1811px"><div class="c g" style="left:1654px;width:196px;text-indent:9.2px"><b class="z">0</b><b class="z">0</b>19FE8<b class="z">0</b></div><div class="c" style="left:1852px;width:248px;text-indent:9.2px"><b class="z">0</b><b class="z">0</b>4<b class="z">0</b><b class="z">0</b><b class="z">0</b><b class="z">0</b><b class="z">0</b></div><div class="c" style="left:2104px;width:1700px;text-indent:9.2px">thawk2.<b class="z">0</b><b class="z">0</b>4<b class="z">0</b><b class="z">0</b><b class="z">0</b><b class="z">0</b><b class="z">0</b></div></div><div class="r" style="top:1833px"><div class="c g" style="left:1654px;width:196px;text-indent:9.2px"><b class="z">0</b><b class="z">0</b>19FE84</div><div class="c" style="left:1852px;width:248px;text-indent:9.2px"><b class="z">0</b><b class="z">0</b><b class="z">0</b><b class="z">0</b><b class="z">0</b><b class="z">0</b><b class="z">0</b><b class="z">0</b></div></div><div class="r" style="top:1855px"><div class="c g" style="left:1654px;width:196px;text-indent:9.2px"><b class="z">0</b><b class="z">0</b>19FE88 &lt;&amp;EntryPoint&gt;</div><div class="c" style="left:1852px;width:248px;text-indent:9.2px"><b class="z">0</b><b class="z">0</b>4FFE6C</div><div class="c" style="left:2104px;width:1700px;text-indent:9.2px">thawk2.EntryPoint</div></div><div class="r" style="top:1877px"><div class="c g" style="left:1654px;width:196px;text-indent:9.2px"><b class="z">0</b><b class="z">0</b>19FE8C</div><div class="c" style="left:1852px;width:248px;text-indent:9.2px"><b class="z">0</b><b class="z">0</b><b class="z">0</b><b class="z">0</b><b class="z">0</b><b class="z">0</b><b class="z">0</b><b class="z">0</b></div></div><div class="r" style="top:1899px"><div class="c g" style="left:1654px;width:196px;text-indent:9.2px"><b class="z">0</b><b class="z">0</b>19FE9<b class="z">0</b></div><div class="c" style="left:1852px;width:248px;text-indent:9.2px"><b class="z">0</b><b class="z">0</b>23B<b class="z">0</b><b class="z">0</b><b class="z">0</b></div></div><div class="r" style="top:1921px"><div class="c g" style="left:1654px;width:196px;text-indent:9.2px"><b class="z">0</b><b class="z">0</b>19FE94</div><div class="c" style="left:1852px;width:248px;text-indent:9.2px"><b class="z">0</b><b class="z">0</b><b class="z">0</b><b class="z">0</b><b class="z">0</b><b class="z">0</b>88</div></div><div class="r" style="top:1943px"><div class="c g" style="left:1654px;width:196px;text-indent:9.2px"><b class="z">0</b><b class="z">0</b>19FE98</div><div class="c" style="left:1852px;width:248px;text-indent:9.2px"><b class="z">0</b><b class="z">0</b><b class="z">0</b><b class="z">0</b><b class="z">0</b><b class="z">0</b><b class="z">0</b>3</div></div></div><div style="left:1850px;top:1569px;width:2px;height:384px;background:#808080;"></div><div style="left:2101px;top:1569px;width:2px;height:384px;background:#808080;"></div><div style="left:3805px;top:1569px;width:33px;height:384px;background:#f0f0f0;"></div><div style="left:3805px;top:1879px;width:33px;height:36px;background:#cdcdcd;"></div><svg style="left:3805px;top:1569px" width="33" height="384" fill="none" stroke="#606060" stroke-width="2.6"><path d="M11.5 21.3L16.5 16L21.5 21.3"/><path d="M11.5 362.7L16.5 368L21.5 362.7"/></svg><div style="left:1654px;top:1953px;width:2151px;height:33px;background:#f0f0f0;"></div><div style="left:1688.5px;top:1953px;width:749.1999999999998px;height:33px;background:#cdcdcd;"></div><svg style="left:1654px;top:1953px" width="2151" height="33" fill="none" stroke="#606060" stroke-width="2.6"><path d="M20.3 11.5L15 16.5L20.3 21.5"/><path d="M2130.7 11.5L2136 16.5L2130.7 21.5"/></svg><div style="left:3805px;top:1953px;width:33px;height:33px;background:#f0f0f0;"></div><span class="s" style="left:6.4px;top:2000.0px;font-size:22.5px;line-height:29px;color:#000;transform:scaleX(0.9432);">Command:</span><div style="left:118px;top:1993px;width:3570px;height:38px;background:#fff;border:1px solid #7a7a7a;"></div><div style="left:3688px;top:1993px;width:150px;height:38px;background:#e1e1e1;"></div><span class="s" style="left:3698.0px;top:2000.0px;font-size:22.5px;line-height:29px;color:#000;transform:scaleX(0.9748);">Default</span><svg style="left:3815px;top:2009.5px" width="7" height="5"><path d="M0 0H7V1.2H5L3.5 4.4L2 1.2H0Z" fill="#000"/></svg><div style="left:0px;top:2035px;width:3840px;height:45px;background:#c0c0c0;"></div><div style="left:4px;top:2041px;width:130px;height:36px;background:#ffff00;border-top:1px solid #c8c800;border-left:1px solid #c8c800;border-right:1px solid #ffffa0;border-bottom:1px solid #ffffa0;"></div><span class="s" style="left:36.9px;top:2046.6px;font-size:22.5px;line-height:29px;color:#ff0000;transform:scaleX(0.8898);">Paused</span><div style="left:146px;top:2041px;width:3304px;height:35px;background:#c0c0c0;border-top:1px solid #808080;border-left:1px solid #808080;border-right:1px solid #fff;border-bottom:1px solid #fff;"></div><span class="s" style="left:154.3px;top:2046.6px;font-size:22.5px;line-height:29px;color:#000;transform:scaleX(0.9727);">INT3 breakpoint at &lt;user32.CreateWindowExA&gt; (76E4F0A0)!</span><div style="left:3464px;top:2041px;width:371px;height:35px;background:#c0c0c0;border-top:1px solid #808080;border-left:1px solid #808080;border-right:1px solid #fff;border-bottom:1px solid #fff;"></div><span class="s" style="left:3472.8px;top:2046.6px;font-size:22.5px;line-height:29px;color:#000;transform:scaleX(0.9846);">Time Wasted Debugging: 0:00:40:55</span></div></body></html>
